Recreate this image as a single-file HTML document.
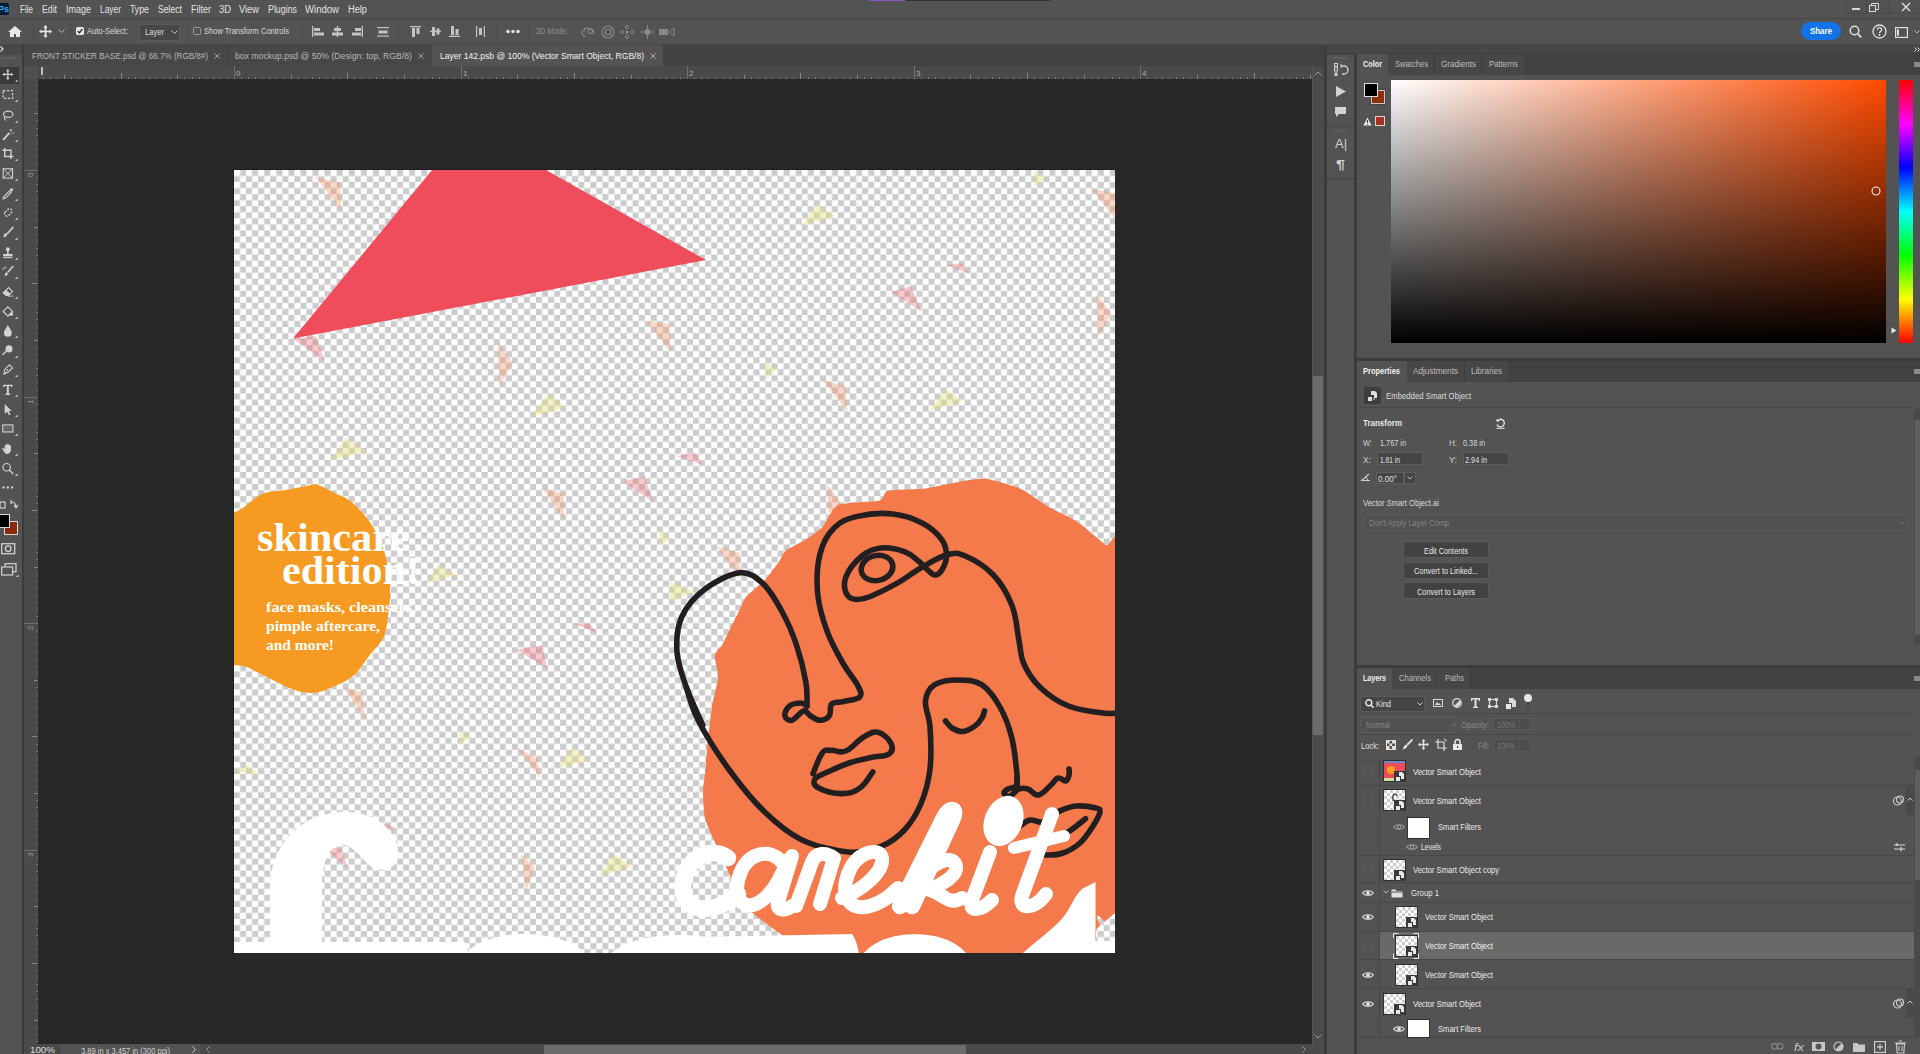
<!DOCTYPE html><html><head><meta charset="utf-8"><style>
html,body{margin:0;padding:0;width:1920px;height:1054px;overflow:hidden;background:#535353;}
body{position:relative;font-family:"Liberation Sans",sans-serif;}
.a{position:absolute;}
.t{white-space:nowrap;}
svg{overflow:visible;}
</style></head><body>
<div class="a" style="left:0px;top:0px;width:1920px;height:18px;background:#535353;"></div>
<div class="a" style="left:0px;top:18px;width:1920px;height:1px;background:#474747;"></div>
<div class="a" style="left:869px;top:0px;width:36px;height:1px;background:#8856c4;"></div>
<div class="a" style="left:905px;top:0px;width:145px;height:1px;background:#333;"></div>
<div class="a" style="left:0px;top:3px;width:9px;height:12px;background:#001e36;border-radius:0 2px 2px 0;"></div>
<div class="a t" style="left:-2px;top:4.4px;font-size:9px;line-height:10.8px;color:#31a8ff;font-weight:bold;">Ps</div>
<div class="a t" style="left:20px;top:4.1px;font-size:10px;line-height:12.0px;color:#e2e2e2;transform:scaleX(0.807);transform-origin:0 0;">File</div>
<div class="a t" style="left:42px;top:4.1px;font-size:10px;line-height:12.0px;color:#e2e2e2;transform:scaleX(0.871);transform-origin:0 0;">Edit</div>
<div class="a t" style="left:66px;top:4.1px;font-size:10px;line-height:12.0px;color:#e2e2e2;transform:scaleX(0.900);transform-origin:0 0;">Image</div>
<div class="a t" style="left:100px;top:4.1px;font-size:10px;line-height:12.0px;color:#e2e2e2;transform:scaleX(0.840);transform-origin:0 0;">Layer</div>
<div class="a t" style="left:130px;top:4.1px;font-size:10px;line-height:12.0px;color:#e2e2e2;transform:scaleX(0.876);transform-origin:0 0;">Type</div>
<div class="a t" style="left:158px;top:4.1px;font-size:10px;line-height:12.0px;color:#e2e2e2;transform:scaleX(0.864);transform-origin:0 0;">Select</div>
<div class="a t" style="left:191px;top:4.1px;font-size:10px;line-height:12.0px;color:#e2e2e2;transform:scaleX(0.900);transform-origin:0 0;">Filter</div>
<div class="a t" style="left:219px;top:4.1px;font-size:10px;line-height:12.0px;color:#e2e2e2;transform:scaleX(0.939);transform-origin:0 0;">3D</div>
<div class="a t" style="left:239px;top:4.1px;font-size:10px;line-height:12.0px;color:#e2e2e2;transform:scaleX(0.931);transform-origin:0 0;">View</div>
<div class="a t" style="left:268px;top:4.1px;font-size:10px;line-height:12.0px;color:#e2e2e2;transform:scaleX(0.884);transform-origin:0 0;">Plugins</div>
<div class="a t" style="left:305px;top:4.1px;font-size:10px;line-height:12.0px;color:#e2e2e2;transform:scaleX(0.956);transform-origin:0 0;">Window</div>
<div class="a t" style="left:348px;top:4.1px;font-size:10px;line-height:12.0px;color:#e2e2e2;transform:scaleX(0.924);transform-origin:0 0;">Help</div>
<div class="a" style="left:1846px;top:0px;width:74px;height:14px;background:#535353;border-left:1px solid #4a4a4a;border-bottom:1px solid #4a4a4a;border-radius:0 0 0 3px;box-sizing:border-box;"></div>
<div class="a" style="left:1866px;top:0px;width:1px;height:14px;background:#4a4a4a;"></div>
<div class="a" style="left:1888px;top:0px;width:1px;height:14px;background:#4a4a4a;"></div>
<div class="a" style="left:1852px;top:8px;width:8px;height:2px;background:#d8d8d8;"></div>
<svg class="a" style="left:1869px;top:3px;" width="10" height="9" viewBox="0 0 10 9"><rect x="0.5" y="2.5" width="6" height="6" fill="none" stroke="#d8d8d8"/><path d="M2.5 2.5V0.5h7v6h-3" fill="none" stroke="#d8d8d8"/></svg>
<svg class="a" style="left:1901px;top:2px;" width="10" height="10" viewBox="0 0 10 10"><path d="M1 1L9 9M9 1L1 9" stroke="#e0e0e0" stroke-width="1.4"/></svg>
<div class="a" style="left:0px;top:19px;width:1920px;height:25px;background:#535353;"></div>
<div class="a" style="left:0px;top:44px;width:1920px;height:1px;background:#474747;"></div>
<svg class="a" style="left:8px;top:26px;" width="14" height="11" viewBox="0 0 14 11"><path d="M7 0L0 6h2v5h4V8h2v3h4V6h2z" fill="#e8e8e8"/></svg>
<div class="a" style="left:33px;top:24px;width:1px;height:16px;background:#4a4a4a;"></div>
<div class="a" style="left:70px;top:24px;width:1px;height:16px;background:#4a4a4a;"></div>
<div class="a" style="left:187px;top:24px;width:1px;height:16px;background:#4a4a4a;"></div>
<div class="a" style="left:302px;top:24px;width:1px;height:16px;background:#4a4a4a;"></div>
<div class="a" style="left:398px;top:24px;width:1px;height:16px;background:#4a4a4a;"></div>
<div class="a" style="left:496px;top:24px;width:1px;height:16px;background:#4a4a4a;"></div>
<div class="a" style="left:528px;top:24px;width:1px;height:16px;background:#4a4a4a;"></div>
<svg class="a" style="left:39px;top:25px;" width="13" height="13" viewBox="0 0 13 13"><path d="M6.5 0l2.2 2.6H7.4v3.1h3.1V4.4L13 6.5l-2.5 2.1V7.3H7.4v3.1h1.3L6.5 13l-2.2-2.6h1.3V7.3H2.5v1.3L0 6.5l2.5-2.1v1.3h3.1V2.6H4.3z" fill="#e8e8e8"/></svg>
<svg class="a" style="left:58px;top:29px;" width="7" height="5" viewBox="0 0 7 5"><path d="M0.5 0.5l3 3 3-3" fill="none" stroke="#bbb"/></svg>
<div class="a" style="left:76px;top:27px;width:8px;height:8px;background:#e8e8e8;border-radius:1.5px;"></div>
<svg class="a" style="left:77px;top:28px;" width="6" height="6" viewBox="0 0 6 6"><path d="M0.8 3l1.6 1.8L5.3 1" fill="none" stroke="#333" stroke-width="1.4"/></svg>
<div class="a t" style="left:87px;top:26.4px;font-size:9px;line-height:10.8px;color:#dcdcdc;transform:scaleX(0.836);transform-origin:0 0;">Auto-Select:</div>
<div class="a" style="left:139px;top:24px;width:41px;height:17px;background:#474747;border:1px solid #5c5c5c;border-radius:2px;box-sizing:border-box;"></div>
<div class="a t" style="left:145px;top:27.4px;font-size:9px;line-height:10.8px;color:#dcdcdc;transform:scaleX(0.844);transform-origin:0 0;">Layer</div>
<svg class="a" style="left:171px;top:30px;" width="7" height="5" viewBox="0 0 7 5"><path d="M0.5 0.5l3 3 3-3" fill="none" stroke="#ccc"/></svg>
<div class="a" style="left:193px;top:27px;width:8px;height:8px;background:transparent;border:1px solid #9a9a9a;border-radius:1.5px;box-sizing:border-box;"></div>
<div class="a t" style="left:204px;top:26.4px;font-size:9px;line-height:10.8px;color:#dcdcdc;transform:scaleX(0.837);transform-origin:0 0;">Show Transform Controls</div>
<svg class="a" style="left:312px;top:26px;" width="12" height="11" viewBox="0 0 12 11"><rect x="0" y="0" width="1.3" height="11" fill="#c4c4c4"/><rect x="2" y="2" width="6" height="3" fill="#c4c4c4"/><rect x="2" y="6.5" width="10" height="3" fill="#c4c4c4"/></svg>
<svg class="a" style="left:332px;top:26px;" width="11" height="11" viewBox="0 0 11 11"><rect x="4.8" y="0" width="1.3" height="11" fill="#c4c4c4"/><rect x="2" y="2" width="7" height="3" fill="#c4c4c4"/><rect x="0" y="6.5" width="11" height="3" fill="#c4c4c4"/></svg>
<svg class="a" style="left:352px;top:26px;" width="11" height="11" viewBox="0 0 11 11"><rect x="9.7" y="0" width="1.3" height="11" fill="#c4c4c4"/><rect x="3" y="2" width="6" height="3" fill="#c4c4c4"/><rect x="0" y="6.5" width="9" height="3" fill="#c4c4c4"/></svg>
<svg class="a" style="left:377px;top:27px;" width="12" height="10" viewBox="0 0 12 10"><rect x="0" y="0" width="12" height="1.2" fill="#c4c4c4"/><rect x="1.5" y="3.5" width="9" height="3" fill="#c4c4c4"/><rect x="0" y="8.5" width="12" height="1.2" fill="#c4c4c4"/></svg>
<svg class="a" style="left:410px;top:26px;" width="11" height="11" viewBox="0 0 11 11"><rect x="0" y="0" width="11" height="1.3" fill="#c4c4c4"/><rect x="2" y="2" width="3" height="9" fill="#c4c4c4"/><rect x="6.5" y="2" width="3" height="6" fill="#c4c4c4"/></svg>
<svg class="a" style="left:430px;top:26px;" width="11" height="11" viewBox="0 0 11 11"><rect x="0" y="4.8" width="11" height="1.3" fill="#c4c4c4"/><rect x="2" y="1" width="3" height="9" fill="#c4c4c4"/><rect x="6.5" y="2.5" width="3" height="6" fill="#c4c4c4"/></svg>
<svg class="a" style="left:449px;top:26px;" width="11" height="11" viewBox="0 0 11 11"><rect x="0" y="9.7" width="11" height="1.3" fill="#c4c4c4"/><rect x="2" y="0" width="3" height="9" fill="#c4c4c4"/><rect x="6.5" y="3" width="3" height="6" fill="#c4c4c4"/></svg>
<svg class="a" style="left:476px;top:26px;" width="9" height="11" viewBox="0 0 9 11"><rect x="0" y="0" width="1.2" height="11" fill="#c4c4c4"/><rect x="3" y="2" width="3" height="7" fill="#c4c4c4"/><rect x="7.8" y="0" width="1.2" height="11" fill="#c4c4c4"/></svg>
<svg class="a" style="left:506px;top:29px;" width="14" height="5" viewBox="0 0 14 5"><circle cx="2" cy="2.5" r="1.8" fill="#e0e0e0"/><circle cx="7" cy="2.5" r="1.8" fill="#e0e0e0"/><circle cx="12" cy="2.5" r="1.8" fill="#e0e0e0"/></svg>
<div class="a t" style="left:536px;top:26.4px;font-size:9px;line-height:10.8px;color:#8c8c8c;transform:scaleX(0.820);transform-origin:0 0;">3D Mode:</div>
<svg class="a" style="left:581px;top:25px;" width="15" height="13" viewBox="0 0 15 13"><path d="M3 10C0 10 0 6 3 6 3 2 8 2 9 5 12 4 14 7 12 9" fill="none" stroke="#8a8a8a" stroke-width="1.2"/><circle cx="9" cy="6" r="2.5" fill="none" stroke="#8a8a8a"/><path d="M2 11l3 1" stroke="#8a8a8a"/></svg>
<svg class="a" style="left:601px;top:25px;" width="14" height="14" viewBox="0 0 14 14"><circle cx="7" cy="7" r="6" fill="none" stroke="#8a8a8a" stroke-width="1.2"/><circle cx="7" cy="7" r="3" fill="none" stroke="#8a8a8a" stroke-width="1.2"/></svg>
<svg class="a" style="left:620px;top:25px;" width="14" height="14" viewBox="0 0 14 14"><path d="M7 0l2 2-2 2-2-2zM7 10l2 2-2 2-2-2zM0 7l2-2 2 2-2 2zM10 7l2-2 2 2-2 2z" fill="none" stroke="#8a8a8a"/><circle cx="7" cy="7" r="1.5" fill="#8a8a8a"/></svg>
<svg class="a" style="left:640px;top:25px;" width="15" height="14" viewBox="0 0 15 14"><path d="M7.5 0v14M0 7h15" stroke="#8a8a8a" stroke-width="1.2"/><circle cx="7.5" cy="7" r="3" fill="#8a8a8a"/></svg>
<svg class="a" style="left:659px;top:27px;" width="16" height="10" viewBox="0 0 16 10"><rect x="0" y="2" width="9" height="6" fill="#8a8a8a"/><path d="M10 5l5-4v8z" fill="none" stroke="#8a8a8a"/></svg>
<div class="a" style="left:1801px;top:22px;width:40px;height:18px;background:#1473e6;border-radius:9px;"></div>
<div class="a t" style="left:1810px;top:26.4px;font-size:9px;line-height:10.8px;color:#ffffff;font-weight:bold;transform:scaleX(0.880);transform-origin:0 0;">Share</div>
<svg class="a" style="left:1849px;top:25px;" width="13" height="13" viewBox="0 0 13 13"><circle cx="5.5" cy="5.5" r="4.3" fill="none" stroke="#e0e0e0" stroke-width="1.5"/><path d="M8.6 8.6L12.3 12.3" stroke="#e0e0e0" stroke-width="1.7"/></svg>
<svg class="a" style="left:1872px;top:24px;" width="15" height="15" viewBox="0 0 15 15"><circle cx="7.5" cy="7.5" r="6.5" fill="none" stroke="#e0e0e0" stroke-width="1.3"/><path d="M5.4 5.8a2.1 2.1 0 1 1 3 1.8c-.7.4-.9.8-.9 1.6" fill="none" stroke="#e0e0e0" stroke-width="1.3"/><circle cx="7.5" cy="11" r=".9" fill="#e0e0e0"/></svg>
<svg class="a" style="left:1895px;top:27px;" width="13" height="11" viewBox="0 0 13 11"><rect x="0.6" y="0.6" width="11.8" height="9.8" fill="none" stroke="#e0e0e0" stroke-width="1.2"/><rect x="2" y="2.5" width="2" height="6" fill="#e0e0e0"/></svg>
<svg class="a" style="left:1914px;top:30px;" width="6" height="4" viewBox="0 0 6 4"><path d="M0.5 0.5l2.5 2.5 2.5-2.5" fill="none" stroke="#bbb"/></svg>
<div class="a" style="left:0px;top:45px;width:22px;height:999px;background:#535353;"></div>
<div class="a" style="left:0px;top:45px;width:22px;height:9px;background:#474747;"></div>
<svg class="a" style="left:0px;top:46px;" width="5" height="6" viewBox="0 0 5 6"><path d="M0.5 0.5l2.5 2.5-2.5 2.5" fill="none" stroke="#ddd" stroke-width="1.2"/></svg>
<div class="a" style="left:0px;top:54px;width:22px;height:1px;background:#4a4a4a;"></div>
<div class="a" style="left:1px;top:57px;width:15px;height:2px;background:#5e5e5e;"></div>
<div class="a" style="left:22px;top:45px;width:2px;height:1009px;background:#3c3c3c;"></div>
<div class="a" style="left:0px;top:67px;width:19px;height:17px;background:#3a3a3a;"></div>
<svg class="a" style="left:0px;top:66px;" width="16" height="16" viewBox="0 0 16 16"><g transform="translate(1.6 2.2) scale(0.78)"><path d="M8 1l2.4 2.8H8.8v3.4h3.4V5.6L15 8l-2.8 2.4V8.8H8.8v3.4h1.6L8 15l-2.4-2.8h1.6V8.8H3.8v1.6L1 8l2.8-2.4v1.6h3.4V3.8H5.6z" fill="#d2d2d2"/></g></svg>
<svg class="a" style="left:15px;top:79px;" width="3" height="3" viewBox="0 0 3 3"><path d="M2.5 0.5v2.5H0z" fill="#d2d2d2"/></svg>
<svg class="a" style="left:0px;top:86px;" width="16" height="16" viewBox="0 0 16 16"><g transform="translate(1.6 2.2) scale(0.78)"><rect x="2" y="3" width="12" height="10" fill="none" stroke="#d2d2d2" stroke-width="1.6" stroke-dasharray="3 2"/></g></svg>
<svg class="a" style="left:15px;top:99px;" width="3" height="3" viewBox="0 0 3 3"><path d="M2.5 0.5v2.5H0z" fill="#d2d2d2"/></svg>
<svg class="a" style="left:0px;top:107px;" width="16" height="16" viewBox="0 0 16 16"><g transform="translate(1.6 2.2) scale(0.78)"><ellipse cx="8.5" cy="6.5" rx="6" ry="4" fill="none" stroke="#d2d2d2" stroke-width="1.4"/><path d="M4 10c-1 2 0 4 2 4" fill="none" stroke="#d2d2d2" stroke-width="1.3"/></g></svg>
<svg class="a" style="left:15px;top:120px;" width="3" height="3" viewBox="0 0 3 3"><path d="M2.5 0.5v2.5H0z" fill="#d2d2d2"/></svg>
<svg class="a" style="left:0px;top:126px;" width="16" height="16" viewBox="0 0 16 16"><g transform="translate(1.6 2.2) scale(0.78)"><path d="M2 15L10 6" stroke="#d2d2d2" stroke-width="2.4"/><path d="M12 1v3M10.5 2.5h3M14 6h2M12 7l1 1" stroke="#d2d2d2" stroke-width="1.2"/></g></svg>
<svg class="a" style="left:15px;top:139px;" width="3" height="3" viewBox="0 0 3 3"><path d="M2.5 0.5v2.5H0z" fill="#d2d2d2"/></svg>
<svg class="a" style="left:0px;top:145px;" width="16" height="16" viewBox="0 0 16 16"><g transform="translate(1.6 2.2) scale(0.78)"><path d="M4 1v11h11M1 4h11v11" fill="none" stroke="#d2d2d2" stroke-width="1.8"/></g></svg>
<svg class="a" style="left:15px;top:158px;" width="3" height="3" viewBox="0 0 3 3"><path d="M2.5 0.5v2.5H0z" fill="#d2d2d2"/></svg>
<svg class="a" style="left:0px;top:165px;" width="16" height="16" viewBox="0 0 16 16"><g transform="translate(1.6 2.2) scale(0.78)"><rect x="2" y="2" width="12" height="12" fill="none" stroke="#d2d2d2" stroke-width="1.4"/><path d="M2 2l12 12M14 2L2 14" stroke="#d2d2d2" stroke-width="1.2"/></g></svg>
<svg class="a" style="left:15px;top:178px;" width="3" height="3" viewBox="0 0 3 3"><path d="M2.5 0.5v2.5H0z" fill="#d2d2d2"/></svg>
<svg class="a" style="left:0px;top:185px;" width="16" height="16" viewBox="0 0 16 16"><g transform="translate(1.6 2.2) scale(0.78)"><path d="M2 15l1-3 7-7 2 2-7 7z" fill="none" stroke="#d2d2d2" stroke-width="1.4"/><path d="M10 3l3-2 2 2-2 3z" fill="#d2d2d2"/></g></svg>
<svg class="a" style="left:15px;top:198px;" width="3" height="3" viewBox="0 0 3 3"><path d="M2.5 0.5v2.5H0z" fill="#d2d2d2"/></svg>
<svg class="a" style="left:0px;top:204px;" width="16" height="16" viewBox="0 0 16 16"><g transform="translate(1.6 2.2) scale(0.78)"><rect x="3" y="5" width="11" height="6" rx="3" transform="rotate(-45 8.5 8)" fill="none" stroke="#d2d2d2" stroke-width="1.6" stroke-dasharray="2.5 1.5"/></g></svg>
<svg class="a" style="left:15px;top:217px;" width="3" height="3" viewBox="0 0 3 3"><path d="M2.5 0.5v2.5H0z" fill="#d2d2d2"/></svg>
<svg class="a" style="left:0px;top:224px;" width="16" height="16" viewBox="0 0 16 16"><g transform="translate(1.6 2.2) scale(0.78)"><path d="M15 1L7 10" stroke="#d2d2d2" stroke-width="2.2"/><path d="M6 9c-3 0-3 3-4 5 3 0 5-1 5-4z" fill="#d2d2d2"/></g></svg>
<svg class="a" style="left:15px;top:237px;" width="3" height="3" viewBox="0 0 3 3"><path d="M2.5 0.5v2.5H0z" fill="#d2d2d2"/></svg>
<svg class="a" style="left:0px;top:244px;" width="16" height="16" viewBox="0 0 16 16"><g transform="translate(1.6 2.2) scale(0.78)"><circle cx="8" cy="4" r="2.5" fill="#d2d2d2"/><rect x="7" y="6" width="2" height="4" fill="#d2d2d2"/><rect x="2" y="10" width="12" height="3" fill="#d2d2d2"/><rect x="2" y="14" width="12" height="1.3" fill="#d2d2d2"/></g></svg>
<svg class="a" style="left:15px;top:257px;" width="3" height="3" viewBox="0 0 3 3"><path d="M2.5 0.5v2.5H0z" fill="#d2d2d2"/></svg>
<svg class="a" style="left:0px;top:263px;" width="16" height="16" viewBox="0 0 16 16"><g transform="translate(1.6 2.2) scale(0.78)"><path d="M15 1L8 9" stroke="#d2d2d2" stroke-width="2"/><path d="M7 9c-2 0-3 2-3 5 3 0 4-2 4-4z" fill="#d2d2d2"/><path d="M1 6a5 5 0 0 1 5-3" fill="none" stroke="#d2d2d2" stroke-width="1.2"/></g></svg>
<svg class="a" style="left:15px;top:276px;" width="3" height="3" viewBox="0 0 3 3"><path d="M2.5 0.5v2.5H0z" fill="#d2d2d2"/></svg>
<svg class="a" style="left:0px;top:283px;" width="16" height="16" viewBox="0 0 16 16"><g transform="translate(1.6 2.2) scale(0.78)"><path d="M2 10l7-7 5 5-5 5H6z" fill="none" stroke="#d2d2d2" stroke-width="1.4"/><path d="M2 10l4-4 5 5-2 2H6z" fill="#d2d2d2"/><path d="M8 14h7" stroke="#d2d2d2" stroke-width="1.2"/></g></svg>
<svg class="a" style="left:15px;top:296px;" width="3" height="3" viewBox="0 0 3 3"><path d="M2.5 0.5v2.5H0z" fill="#d2d2d2"/></svg>
<svg class="a" style="left:0px;top:303px;" width="16" height="16" viewBox="0 0 16 16"><g transform="translate(1.6 2.2) scale(0.78)"><path d="M2 8l6-6 6 6-6 6z" fill="none" stroke="#d2d2d2" stroke-width="1.5"/><path d="M8 14l6-6 1 5z" fill="#d2d2d2"/></g></svg>
<svg class="a" style="left:15px;top:316px;" width="3" height="3" viewBox="0 0 3 3"><path d="M2.5 0.5v2.5H0z" fill="#d2d2d2"/></svg>
<svg class="a" style="left:0px;top:322px;" width="16" height="16" viewBox="0 0 16 16"><g transform="translate(1.6 2.2) scale(0.78)"><path d="M8 1C6 5 3 8 3 11a5 5 0 0 0 10 0c0-3-3-6-5-10z" fill="#d2d2d2"/></g></svg>
<svg class="a" style="left:15px;top:335px;" width="3" height="3" viewBox="0 0 3 3"><path d="M2.5 0.5v2.5H0z" fill="#d2d2d2"/></svg>
<svg class="a" style="left:0px;top:342px;" width="16" height="16" viewBox="0 0 16 16"><g transform="translate(1.6 2.2) scale(0.78)"><circle cx="9.5" cy="6" r="4.5" fill="#d2d2d2"/><path d="M6 9l-5 5" stroke="#d2d2d2" stroke-width="1.8"/></g></svg>
<svg class="a" style="left:15px;top:355px;" width="3" height="3" viewBox="0 0 3 3"><path d="M2.5 0.5v2.5H0z" fill="#d2d2d2"/></svg>
<svg class="a" style="left:0px;top:361px;" width="16" height="16" viewBox="0 0 16 16"><g transform="translate(1.6 2.2) scale(0.78)"><path d="M3 14l1-6 6-6 4 4-6 6z" fill="none" stroke="#d2d2d2" stroke-width="1.4"/><path d="M3 14l4-4" stroke="#d2d2d2"/><circle cx="7.5" cy="8.5" r="1.2" fill="#d2d2d2"/></g></svg>
<svg class="a" style="left:15px;top:374px;" width="3" height="3" viewBox="0 0 3 3"><path d="M2.5 0.5v2.5H0z" fill="#d2d2d2"/></svg>
<svg class="a" style="left:0px;top:381px;" width="16" height="16" viewBox="0 0 16 16"><g transform="translate(1.6 2.2) scale(0.78)"><path d="M2 2h12v3h-1.5L12 3.5H9.2V13l1.8.5V15H5v-1.5l1.8-.5V3.5H4L3.5 5H2z" fill="#d2d2d2"/></g></svg>
<svg class="a" style="left:15px;top:394px;" width="3" height="3" viewBox="0 0 3 3"><path d="M2.5 0.5v2.5H0z" fill="#d2d2d2"/></svg>
<svg class="a" style="left:0px;top:401px;" width="16" height="16" viewBox="0 0 16 16"><g transform="translate(1.6 2.2) scale(0.78)"><path d="M4 1v13l3-3 2.5 4.5 2-1L9 10h4z" fill="#d2d2d2"/></g></svg>
<svg class="a" style="left:15px;top:414px;" width="3" height="3" viewBox="0 0 3 3"><path d="M2.5 0.5v2.5H0z" fill="#d2d2d2"/></svg>
<svg class="a" style="left:0px;top:420px;" width="16" height="16" viewBox="0 0 16 16"><g transform="translate(1.6 2.2) scale(0.78)"><rect x="1.5" y="3.5" width="13" height="9" fill="none" stroke="#d2d2d2" stroke-width="1.5"/><rect x="3" y="5" width="10" height="6" fill="#6a6a6a"/></g></svg>
<svg class="a" style="left:15px;top:433px;" width="3" height="3" viewBox="0 0 3 3"><path d="M2.5 0.5v2.5H0z" fill="#d2d2d2"/></svg>
<svg class="a" style="left:0px;top:440px;" width="16" height="16" viewBox="0 0 16 16"><g transform="translate(1.6 2.2) scale(0.78)"><path d="M4 9V4.5a1 1 0 0 1 2 0V8V3a1 1 0 0 1 2 0v5V3.5a1 1 0 0 1 2 0V8V5a1 1 0 0 1 2 0v5c0 3-2 5-5 5-2 0-3-1-4-3l-2-3a1 1 0 0 1 2-1z" fill="#d2d2d2"/></g></svg>
<svg class="a" style="left:15px;top:453px;" width="3" height="3" viewBox="0 0 3 3"><path d="M2.5 0.5v2.5H0z" fill="#d2d2d2"/></svg>
<svg class="a" style="left:0px;top:460px;" width="16" height="16" viewBox="0 0 16 16"><g transform="translate(1.6 2.2) scale(0.78)"><circle cx="6.5" cy="6.5" r="4.8" fill="none" stroke="#d2d2d2" stroke-width="1.5"/><path d="M10 10l5 5" stroke="#d2d2d2" stroke-width="1.8"/></g></svg>
<svg class="a" style="left:15px;top:473px;" width="3" height="3" viewBox="0 0 3 3"><path d="M2.5 0.5v2.5H0z" fill="#d2d2d2"/></svg>
<svg class="a" style="left:0px;top:479px;" width="16" height="16" viewBox="0 0 16 16"><g transform="translate(1.6 2.2) scale(0.78)"><circle cx="2.5" cy="8" r="1.5" fill="#d2d2d2"/><circle cx="8" cy="8" r="1.5" fill="#d2d2d2"/><circle cx="13.5" cy="8" r="1.5" fill="#d2d2d2"/></g></svg>
<svg class="a" style="left:0px;top:500px;" width="20" height="10" viewBox="0 0 20 10"><rect x="0" y="2" width="5" height="6" fill="none" stroke="#d2d2d2" stroke-width="1.2"/><path d="M11 2c4 0 5 2 5 5M14 5l2 3 2-3M11 0v4" fill="none" stroke="#d2d2d2" stroke-width="1.2"/></svg>
<div class="a" style="left:4px;top:521px;width:14px;height:14px;background:#8b2a0c;border:1px solid #d8d8d8;box-sizing:border-box;"></div>
<div class="a" style="left:0px;top:514px;width:10px;height:14px;background:#000;border:1px solid #d8d8d8;border-left:none;box-sizing:border-box;"></div>
<svg class="a" style="left:1px;top:543px;" width="16" height="12" viewBox="0 0 16 12"><rect x="0.7" y="0.7" width="13" height="10" fill="none" stroke="#d2d2d2" stroke-width="1.3"/><circle cx="7.2" cy="5.7" r="2.8" fill="none" stroke="#d2d2d2" stroke-width="1.3"/></svg>
<svg class="a" style="left:1px;top:563px;" width="18" height="13" viewBox="0 0 18 13"><rect x="4" y="0.7" width="11" height="8" fill="none" stroke="#d2d2d2" stroke-width="1.2"/><rect x="0.7" y="4" width="11" height="8" fill="#535353" stroke="#d2d2d2" stroke-width="1.2"/></svg>
<svg class="a" style="left:16px;top:574px;" width="3" height="3" viewBox="0 0 3 3"><path d="M2.5 0.5v2.5H0z" fill="#d2d2d2"/></svg>
<div class="a" style="left:24px;top:45px;width:1300px;height:21px;background:#424242;"></div>
<div class="a" style="left:24px;top:45px;width:203px;height:21px;background:#474747;"></div>
<div class="a" style="left:227px;top:45px;width:1px;height:21px;background:#3d3d3d;"></div>
<div class="a" style="left:228px;top:45px;width:204px;height:21px;background:#474747;"></div>
<div class="a" style="left:432px;top:45px;width:231px;height:21px;background:#535353;"></div>
<div class="a t" style="left:32px;top:50.9px;font-size:9px;line-height:10.8px;color:#b8b8b8;transform:scaleX(0.898);transform-origin:0 0;">FRONT STICKER BASE.psd @ 66.7% (RGB/8#)</div>
<svg class="a" style="left:214px;top:52.5px;" width="6" height="6" viewBox="0 0 6 6"><path d="M0.5 0.5l5 5M5.5 0.5l-5 5" stroke="#a8a8a8" stroke-width="0.9"/></svg>
<div class="a t" style="left:235px;top:50.9px;font-size:9px;line-height:10.8px;color:#b8b8b8;transform:scaleX(0.963);transform-origin:0 0;">box mockup.psd @ 50% (Design: top, RGB/8)</div>
<svg class="a" style="left:418px;top:52.5px;" width="6" height="6" viewBox="0 0 6 6"><path d="M0.5 0.5l5 5M5.5 0.5l-5 5" stroke="#a8a8a8" stroke-width="0.9"/></svg>
<div class="a t" style="left:439.5px;top:50.9px;font-size:9px;line-height:10.8px;color:#f2f2f2;transform:scaleX(0.948);transform-origin:0 0;">Layer 142.psb @ 100% (Vector Smart Object, RGB/8)</div>
<svg class="a" style="left:650px;top:52.5px;" width="6" height="6" viewBox="0 0 6 6"><path d="M0.5 0.5l5 5M5.5 0.5l-5 5" stroke="#c0c0c0" stroke-width="0.9"/></svg>
<div class="a" style="left:24px;top:66px;width:1300px;height:13px;background:#4a4a4a;"></div>
<div class="a" style="left:24px;top:66px;width:14px;height:13px;background:#505050;"></div>
<div class="a" style="left:24px;top:79px;width:14px;height:965px;background:#4a4a4a;"></div>
<div class="a" style="left:38px;top:79px;width:1274px;height:965px;background:#282828;"></div>
<svg class="a" style="left:38px;top:66px;" width="1274" height="13" viewBox="0 0 1274 13"><g fill="#858585"><rect x="5" y="11.5" width="1" height="1.5"/><rect x="12" y="11.5" width="1" height="1.5"/><rect x="19" y="11.5" width="1" height="1.5"/><rect x="26" y="9" width="1" height="4"/><rect x="33" y="11.5" width="1" height="1.5"/><rect x="40" y="11.5" width="1" height="1.5"/><rect x="47" y="11.5" width="1" height="1.5"/><rect x="54" y="11.5" width="1" height="1.5"/><rect x="61" y="11.5" width="1" height="1.5"/><rect x="69" y="11.5" width="1" height="1.5"/><rect x="76" y="11.5" width="1" height="1.5"/><rect x="83" y="7" width="1" height="6"/><rect x="90" y="11.5" width="1" height="1.5"/><rect x="97" y="11.5" width="1" height="1.5"/><rect x="104" y="11.5" width="1" height="1.5"/><rect x="111" y="11.5" width="1" height="1.5"/><rect x="118" y="11.5" width="1" height="1.5"/><rect x="125" y="11.5" width="1" height="1.5"/><rect x="132" y="11.5" width="1" height="1.5"/><rect x="139" y="9" width="1" height="4"/><rect x="146" y="11.5" width="1" height="1.5"/><rect x="154" y="11.5" width="1" height="1.5"/><rect x="161" y="11.5" width="1" height="1.5"/><rect x="168" y="11.5" width="1" height="1.5"/><rect x="175" y="11.5" width="1" height="1.5"/><rect x="182" y="11.5" width="1" height="1.5"/><rect x="189" y="11.5" width="1" height="1.5"/><rect x="196" y="0" width="1" height="13" fill="#6e6e6e"/><rect x="203" y="11.5" width="1" height="1.5"/><rect x="210" y="11.5" width="1" height="1.5"/><rect x="217" y="11.5" width="1" height="1.5"/><rect x="224" y="11.5" width="1" height="1.5"/><rect x="231" y="11.5" width="1" height="1.5"/><rect x="238" y="11.5" width="1" height="1.5"/><rect x="246" y="11.5" width="1" height="1.5"/><rect x="253" y="9" width="1" height="4"/><rect x="260" y="11.5" width="1" height="1.5"/><rect x="267" y="11.5" width="1" height="1.5"/><rect x="274" y="11.5" width="1" height="1.5"/><rect x="281" y="11.5" width="1" height="1.5"/><rect x="288" y="11.5" width="1" height="1.5"/><rect x="295" y="11.5" width="1" height="1.5"/><rect x="302" y="11.5" width="1" height="1.5"/><rect x="309" y="7" width="1" height="6"/><rect x="316" y="11.5" width="1" height="1.5"/><rect x="323" y="11.5" width="1" height="1.5"/><rect x="331" y="11.5" width="1" height="1.5"/><rect x="338" y="11.5" width="1" height="1.5"/><rect x="345" y="11.5" width="1" height="1.5"/><rect x="352" y="11.5" width="1" height="1.5"/><rect x="359" y="11.5" width="1" height="1.5"/><rect x="366" y="9" width="1" height="4"/><rect x="373" y="11.5" width="1" height="1.5"/><rect x="380" y="11.5" width="1" height="1.5"/><rect x="387" y="11.5" width="1" height="1.5"/><rect x="394" y="11.5" width="1" height="1.5"/><rect x="401" y="11.5" width="1" height="1.5"/><rect x="408" y="11.5" width="1" height="1.5"/><rect x="416" y="11.5" width="1" height="1.5"/><rect x="423" y="0" width="1" height="13" fill="#6e6e6e"/><rect x="430" y="11.5" width="1" height="1.5"/><rect x="437" y="11.5" width="1" height="1.5"/><rect x="444" y="11.5" width="1" height="1.5"/><rect x="451" y="11.5" width="1" height="1.5"/><rect x="458" y="11.5" width="1" height="1.5"/><rect x="465" y="11.5" width="1" height="1.5"/><rect x="472" y="11.5" width="1" height="1.5"/><rect x="479" y="9" width="1" height="4"/><rect x="486" y="11.5" width="1" height="1.5"/><rect x="493" y="11.5" width="1" height="1.5"/><rect x="500" y="11.5" width="1" height="1.5"/><rect x="508" y="11.5" width="1" height="1.5"/><rect x="515" y="11.5" width="1" height="1.5"/><rect x="522" y="11.5" width="1" height="1.5"/><rect x="529" y="11.5" width="1" height="1.5"/><rect x="536" y="7" width="1" height="6"/><rect x="543" y="11.5" width="1" height="1.5"/><rect x="550" y="11.5" width="1" height="1.5"/><rect x="557" y="11.5" width="1" height="1.5"/><rect x="564" y="11.5" width="1" height="1.5"/><rect x="571" y="11.5" width="1" height="1.5"/><rect x="578" y="11.5" width="1" height="1.5"/><rect x="585" y="11.5" width="1" height="1.5"/><rect x="593" y="9" width="1" height="4"/><rect x="600" y="11.5" width="1" height="1.5"/><rect x="607" y="11.5" width="1" height="1.5"/><rect x="614" y="11.5" width="1" height="1.5"/><rect x="621" y="11.5" width="1" height="1.5"/><rect x="628" y="11.5" width="1" height="1.5"/><rect x="635" y="11.5" width="1" height="1.5"/><rect x="642" y="11.5" width="1" height="1.5"/><rect x="649" y="0" width="1" height="13" fill="#6e6e6e"/><rect x="656" y="11.5" width="1" height="1.5"/><rect x="663" y="11.5" width="1" height="1.5"/><rect x="670" y="11.5" width="1" height="1.5"/><rect x="678" y="11.5" width="1" height="1.5"/><rect x="685" y="11.5" width="1" height="1.5"/><rect x="692" y="11.5" width="1" height="1.5"/><rect x="699" y="11.5" width="1" height="1.5"/><rect x="706" y="9" width="1" height="4"/><rect x="713" y="11.5" width="1" height="1.5"/><rect x="720" y="11.5" width="1" height="1.5"/><rect x="727" y="11.5" width="1" height="1.5"/><rect x="734" y="11.5" width="1" height="1.5"/><rect x="741" y="11.5" width="1" height="1.5"/><rect x="748" y="11.5" width="1" height="1.5"/><rect x="755" y="11.5" width="1" height="1.5"/><rect x="762" y="7" width="1" height="6"/><rect x="770" y="11.5" width="1" height="1.5"/><rect x="777" y="11.5" width="1" height="1.5"/><rect x="784" y="11.5" width="1" height="1.5"/><rect x="791" y="11.5" width="1" height="1.5"/><rect x="798" y="11.5" width="1" height="1.5"/><rect x="805" y="11.5" width="1" height="1.5"/><rect x="812" y="11.5" width="1" height="1.5"/><rect x="819" y="9" width="1" height="4"/><rect x="826" y="11.5" width="1" height="1.5"/><rect x="833" y="11.5" width="1" height="1.5"/><rect x="840" y="11.5" width="1" height="1.5"/><rect x="847" y="11.5" width="1" height="1.5"/><rect x="855" y="11.5" width="1" height="1.5"/><rect x="862" y="11.5" width="1" height="1.5"/><rect x="869" y="11.5" width="1" height="1.5"/><rect x="876" y="0" width="1" height="13" fill="#6e6e6e"/><rect x="883" y="11.5" width="1" height="1.5"/><rect x="890" y="11.5" width="1" height="1.5"/><rect x="897" y="11.5" width="1" height="1.5"/><rect x="904" y="11.5" width="1" height="1.5"/><rect x="911" y="11.5" width="1" height="1.5"/><rect x="918" y="11.5" width="1" height="1.5"/><rect x="925" y="11.5" width="1" height="1.5"/><rect x="932" y="9" width="1" height="4"/><rect x="940" y="11.5" width="1" height="1.5"/><rect x="947" y="11.5" width="1" height="1.5"/><rect x="954" y="11.5" width="1" height="1.5"/><rect x="961" y="11.5" width="1" height="1.5"/><rect x="968" y="11.5" width="1" height="1.5"/><rect x="975" y="11.5" width="1" height="1.5"/><rect x="982" y="11.5" width="1" height="1.5"/><rect x="989" y="7" width="1" height="6"/><rect x="996" y="11.5" width="1" height="1.5"/><rect x="1003" y="11.5" width="1" height="1.5"/><rect x="1010" y="11.5" width="1" height="1.5"/><rect x="1017" y="11.5" width="1" height="1.5"/><rect x="1025" y="11.5" width="1" height="1.5"/><rect x="1032" y="11.5" width="1" height="1.5"/><rect x="1039" y="11.5" width="1" height="1.5"/><rect x="1046" y="9" width="1" height="4"/><rect x="1053" y="11.5" width="1" height="1.5"/><rect x="1060" y="11.5" width="1" height="1.5"/><rect x="1067" y="11.5" width="1" height="1.5"/><rect x="1074" y="11.5" width="1" height="1.5"/><rect x="1081" y="11.5" width="1" height="1.5"/><rect x="1088" y="11.5" width="1" height="1.5"/><rect x="1095" y="11.5" width="1" height="1.5"/><rect x="1102" y="0" width="1" height="13" fill="#6e6e6e"/><rect x="1109" y="11.5" width="1" height="1.5"/><rect x="1117" y="11.5" width="1" height="1.5"/><rect x="1124" y="11.5" width="1" height="1.5"/><rect x="1131" y="11.5" width="1" height="1.5"/><rect x="1138" y="11.5" width="1" height="1.5"/><rect x="1145" y="11.5" width="1" height="1.5"/><rect x="1152" y="11.5" width="1" height="1.5"/><rect x="1159" y="9" width="1" height="4"/><rect x="1166" y="11.5" width="1" height="1.5"/><rect x="1173" y="11.5" width="1" height="1.5"/><rect x="1180" y="11.5" width="1" height="1.5"/><rect x="1187" y="11.5" width="1" height="1.5"/><rect x="1194" y="11.5" width="1" height="1.5"/><rect x="1202" y="11.5" width="1" height="1.5"/><rect x="1209" y="11.5" width="1" height="1.5"/><rect x="1216" y="7" width="1" height="6"/><rect x="1223" y="11.5" width="1" height="1.5"/><rect x="1230" y="11.5" width="1" height="1.5"/><rect x="1237" y="11.5" width="1" height="1.5"/><rect x="1244" y="11.5" width="1" height="1.5"/><rect x="1251" y="11.5" width="1" height="1.5"/><rect x="1258" y="11.5" width="1" height="1.5"/><rect x="1265" y="11.5" width="1" height="1.5"/><rect x="1272" y="9" width="1" height="4"/></g></svg>
<div class="a t" style="left:236px;top:68.8px;font-size:8px;line-height:9.6px;color:#aaaaaa;">0</div>
<div class="a t" style="left:463px;top:68.8px;font-size:8px;line-height:9.6px;color:#aaaaaa;">1</div>
<div class="a t" style="left:689px;top:68.8px;font-size:8px;line-height:9.6px;color:#aaaaaa;">2</div>
<div class="a t" style="left:916px;top:68.8px;font-size:8px;line-height:9.6px;color:#aaaaaa;">3</div>
<div class="a t" style="left:1142px;top:68.8px;font-size:8px;line-height:9.6px;color:#aaaaaa;">4</div>
<svg class="a" style="left:24px;top:79px;" width="14" height="965" viewBox="0 0 14 965"><g fill="#858585"><rect x="12.5" y="6" width="1.5" height="1"/><rect x="12.5" y="13" width="1.5" height="1"/><rect x="12.5" y="20" width="1.5" height="1"/><rect x="12.5" y="27" width="1.5" height="1"/><rect x="10" y="34" width="4" height="1"/><rect x="12.5" y="41" width="1.5" height="1"/><rect x="12.5" y="49" width="1.5" height="1"/><rect x="12.5" y="56" width="1.5" height="1"/><rect x="12.5" y="63" width="1.5" height="1"/><rect x="12.5" y="70" width="1.5" height="1"/><rect x="12.5" y="77" width="1.5" height="1"/><rect x="12.5" y="84" width="1.5" height="1"/><rect x="0" y="91" width="14" height="1" fill="#6e6e6e"/><rect x="12.5" y="98" width="1.5" height="1"/><rect x="12.5" y="105" width="1.5" height="1"/><rect x="12.5" y="112" width="1.5" height="1"/><rect x="12.5" y="119" width="1.5" height="1"/><rect x="12.5" y="126" width="1.5" height="1"/><rect x="12.5" y="133" width="1.5" height="1"/><rect x="12.5" y="141" width="1.5" height="1"/><rect x="10" y="148" width="4" height="1"/><rect x="12.5" y="155" width="1.5" height="1"/><rect x="12.5" y="162" width="1.5" height="1"/><rect x="12.5" y="169" width="1.5" height="1"/><rect x="12.5" y="176" width="1.5" height="1"/><rect x="12.5" y="183" width="1.5" height="1"/><rect x="12.5" y="190" width="1.5" height="1"/><rect x="12.5" y="197" width="1.5" height="1"/><rect x="8" y="204" width="6" height="1"/><rect x="12.5" y="211" width="1.5" height="1"/><rect x="12.5" y="218" width="1.5" height="1"/><rect x="12.5" y="226" width="1.5" height="1"/><rect x="12.5" y="233" width="1.5" height="1"/><rect x="12.5" y="240" width="1.5" height="1"/><rect x="12.5" y="247" width="1.5" height="1"/><rect x="12.5" y="254" width="1.5" height="1"/><rect x="10" y="261" width="4" height="1"/><rect x="12.5" y="268" width="1.5" height="1"/><rect x="12.5" y="275" width="1.5" height="1"/><rect x="12.5" y="282" width="1.5" height="1"/><rect x="12.5" y="289" width="1.5" height="1"/><rect x="12.5" y="296" width="1.5" height="1"/><rect x="12.5" y="303" width="1.5" height="1"/><rect x="12.5" y="311" width="1.5" height="1"/><rect x="0" y="318" width="14" height="1" fill="#6e6e6e"/><rect x="12.5" y="325" width="1.5" height="1"/><rect x="12.5" y="332" width="1.5" height="1"/><rect x="12.5" y="339" width="1.5" height="1"/><rect x="12.5" y="346" width="1.5" height="1"/><rect x="12.5" y="353" width="1.5" height="1"/><rect x="12.5" y="360" width="1.5" height="1"/><rect x="12.5" y="367" width="1.5" height="1"/><rect x="10" y="374" width="4" height="1"/><rect x="12.5" y="381" width="1.5" height="1"/><rect x="12.5" y="388" width="1.5" height="1"/><rect x="12.5" y="395" width="1.5" height="1"/><rect x="12.5" y="403" width="1.5" height="1"/><rect x="12.5" y="410" width="1.5" height="1"/><rect x="12.5" y="417" width="1.5" height="1"/><rect x="12.5" y="424" width="1.5" height="1"/><rect x="8" y="431" width="6" height="1"/><rect x="12.5" y="438" width="1.5" height="1"/><rect x="12.5" y="445" width="1.5" height="1"/><rect x="12.5" y="452" width="1.5" height="1"/><rect x="12.5" y="459" width="1.5" height="1"/><rect x="12.5" y="466" width="1.5" height="1"/><rect x="12.5" y="473" width="1.5" height="1"/><rect x="12.5" y="480" width="1.5" height="1"/><rect x="10" y="488" width="4" height="1"/><rect x="12.5" y="495" width="1.5" height="1"/><rect x="12.5" y="502" width="1.5" height="1"/><rect x="12.5" y="509" width="1.5" height="1"/><rect x="12.5" y="516" width="1.5" height="1"/><rect x="12.5" y="523" width="1.5" height="1"/><rect x="12.5" y="530" width="1.5" height="1"/><rect x="12.5" y="537" width="1.5" height="1"/><rect x="0" y="544" width="14" height="1" fill="#6e6e6e"/><rect x="12.5" y="551" width="1.5" height="1"/><rect x="12.5" y="558" width="1.5" height="1"/><rect x="12.5" y="565" width="1.5" height="1"/><rect x="12.5" y="573" width="1.5" height="1"/><rect x="12.5" y="580" width="1.5" height="1"/><rect x="12.5" y="587" width="1.5" height="1"/><rect x="12.5" y="594" width="1.5" height="1"/><rect x="10" y="601" width="4" height="1"/><rect x="12.5" y="608" width="1.5" height="1"/><rect x="12.5" y="615" width="1.5" height="1"/><rect x="12.5" y="622" width="1.5" height="1"/><rect x="12.5" y="629" width="1.5" height="1"/><rect x="12.5" y="636" width="1.5" height="1"/><rect x="12.5" y="643" width="1.5" height="1"/><rect x="12.5" y="650" width="1.5" height="1"/><rect x="8" y="657" width="6" height="1"/><rect x="12.5" y="665" width="1.5" height="1"/><rect x="12.5" y="672" width="1.5" height="1"/><rect x="12.5" y="679" width="1.5" height="1"/><rect x="12.5" y="686" width="1.5" height="1"/><rect x="12.5" y="693" width="1.5" height="1"/><rect x="12.5" y="700" width="1.5" height="1"/><rect x="12.5" y="707" width="1.5" height="1"/><rect x="10" y="714" width="4" height="1"/><rect x="12.5" y="721" width="1.5" height="1"/><rect x="12.5" y="728" width="1.5" height="1"/><rect x="12.5" y="735" width="1.5" height="1"/><rect x="12.5" y="742" width="1.5" height="1"/><rect x="12.5" y="750" width="1.5" height="1"/><rect x="12.5" y="757" width="1.5" height="1"/><rect x="12.5" y="764" width="1.5" height="1"/><rect x="0" y="771" width="14" height="1" fill="#6e6e6e"/><rect x="12.5" y="778" width="1.5" height="1"/><rect x="12.5" y="785" width="1.5" height="1"/><rect x="12.5" y="792" width="1.5" height="1"/><rect x="12.5" y="799" width="1.5" height="1"/><rect x="12.5" y="806" width="1.5" height="1"/><rect x="12.5" y="813" width="1.5" height="1"/><rect x="12.5" y="820" width="1.5" height="1"/><rect x="10" y="827" width="4" height="1"/><rect x="12.5" y="835" width="1.5" height="1"/><rect x="12.5" y="842" width="1.5" height="1"/><rect x="12.5" y="849" width="1.5" height="1"/><rect x="12.5" y="856" width="1.5" height="1"/><rect x="12.5" y="863" width="1.5" height="1"/><rect x="12.5" y="870" width="1.5" height="1"/><rect x="12.5" y="877" width="1.5" height="1"/><rect x="8" y="884" width="6" height="1"/><rect x="12.5" y="891" width="1.5" height="1"/><rect x="12.5" y="898" width="1.5" height="1"/><rect x="12.5" y="905" width="1.5" height="1"/><rect x="12.5" y="912" width="1.5" height="1"/><rect x="12.5" y="920" width="1.5" height="1"/><rect x="12.5" y="927" width="1.5" height="1"/><rect x="12.5" y="934" width="1.5" height="1"/><rect x="10" y="941" width="4" height="1"/><rect x="12.5" y="948" width="1.5" height="1"/><rect x="12.5" y="955" width="1.5" height="1"/><rect x="12.5" y="962" width="1.5" height="1"/></g></svg>
<div class="a t" style="left:28.5px;top:170.0px;font-size:8px;line-height:9.6px;color:#9a9a9a;transform:rotate(-90deg);transform-origin:50% 50%;">0</div>
<div class="a t" style="left:28.5px;top:397.0px;font-size:8px;line-height:9.6px;color:#9a9a9a;transform:rotate(-90deg);transform-origin:50% 50%;">1</div>
<div class="a t" style="left:28.5px;top:623.0px;font-size:8px;line-height:9.6px;color:#9a9a9a;transform:rotate(-90deg);transform-origin:50% 50%;">2</div>
<div class="a t" style="left:28.5px;top:850.0px;font-size:8px;line-height:9.6px;color:#9a9a9a;transform:rotate(-90deg);transform-origin:50% 50%;">3</div>
<div class="a" style="left:41px;top:67px;width:1.5px;height:8px;background:#bdbdbd;"></div>
<div class="a" style="left:1312px;top:66px;width:12px;height:978px;background:#4a4a4a;"></div>
<div class="a" style="left:1312px;top:66px;width:1px;height:978px;background:#565656;"></div>
<div class="a" style="left:1313px;top:376px;width:10px;height:359px;background:#6b6b6b;"></div>
<svg class="a" style="left:1314px;top:71px;" width="8" height="5" viewBox="0 0 8 5"><path d="M0.5 4.5l3.5-3.5 3.5 3.5" fill="none" stroke="#9a9a9a"/></svg>
<svg class="a" style="left:1314px;top:1034px;" width="8" height="5" viewBox="0 0 8 5"><path d="M0.5 0.5l3.5 3.5 3.5-3.5" fill="none" stroke="#9a9a9a"/></svg>
<div class="a" style="left:24px;top:1044px;width:1300px;height:10px;background:#4a4a4a;"></div>
<div class="a" style="left:61px;top:1044px;width:139px;height:10px;background:#535353;"></div>
<div class="a t" style="left:30px;top:1045.4px;font-size:9px;line-height:10.8px;color:#e0e0e0;transform:scaleX(1.086);transform-origin:0 0;">100%</div>
<div class="a t" style="left:81px;top:1045.7px;font-size:8.5px;line-height:10.2px;color:#d0d0d0;transform:scaleX(0.884);transform-origin:0 0;">3.89 in x 3.457 in (300 ppi)</div>
<svg class="a" style="left:192px;top:1046px;" width="4" height="7" viewBox="0 0 4 7"><path d="M0.5 0.5l3 3-3 3" fill="none" stroke="#ccc"/></svg>
<svg class="a" style="left:206px;top:1046px;" width="4" height="7" viewBox="0 0 4 7"><path d="M3.5 0.5l-3 3 3 3" fill="none" stroke="#999"/></svg>
<div class="a" style="left:544px;top:1045px;width:422px;height:9px;background:#6b6b6b;"></div>
<svg class="a" style="left:1302px;top:1046px;" width="4" height="7" viewBox="0 0 4 7"><path d="M0.5 0.5l3 3-3 3" fill="none" stroke="#999"/></svg>
<div class="a" style="left:1324px;top:45px;width:3px;height:1009px;background:#3c3c3c;"></div>
<div class="a" style="left:233px;top:169px;width:882px;height:784px;background:#1e1e1e;"></div>
<div class="a" style="left:234px;top:170px;width:881px;height:783px;background:#ffffff;"></div>
<svg class="a" style="left:234px;top:170px" width="881" height="783" viewBox="234 170 881 783"><defs><clipPath id="ab"><rect x="234" y="170" width="881" height="783"/></clipPath></defs><g clip-path="url(#ab)"><defs><pattern id="ck" x="234" y="170" width="12.08" height="12.08" patternUnits="userSpaceOnUse"><rect x="0" y="0" width="12.08" height="12.08" fill="#fff"/><rect x="6.04" y="0" width="6.04" height="6.04" fill="#cccccc"/><rect x="0" y="6.04" width="6.04" height="6.04" fill="#cccccc"/></pattern></defs><rect x="234" y="170" width="881" height="783" fill="url(#ck)"/><path d="M315.6,176.7 L339.9,182.8 L341.4,211.6Z" fill="rgba(244,150,110,0.38)"/><path d="M292.9,339.0 L315.6,336.0 L324.7,360.4Z" fill="rgba(235,110,120,0.38)"/><path d="M497.8,342.0 L513.0,363.4 L499.3,386.0Z" fill="rgba(244,150,110,0.38)"/><path d="M646.5,321.0 L669.3,324.0 L670.8,352.8Z" fill="rgba(244,150,110,0.38)"/><path d="M547.9,393.8 L566.0,407.4 L531.2,416.5Z" fill="rgba(225,225,120,0.42)"/><path d="M346.0,437.8 L365.7,451.4 L330.8,460.5Z" fill="rgba(225,225,120,0.42)"/><path d="M676.9,456.0 L695.0,453.0 L702.7,465.0Z" fill="rgba(235,110,120,0.38)"/><path d="M1034.0,170.6 L1044.7,178.2 L1034.0,187.3Z" fill="rgba(225,225,120,0.42)"/><path d="M1091.7,188.8 L1116.0,193.4 L1116.0,220.7Z" fill="rgba(244,150,110,0.38)"/><path d="M816.9,204.0 L835.1,216.2 L801.7,225.3Z" fill="rgba(225,225,120,0.42)"/><path d="M946.0,264.8 L961.2,263.3 L970.3,273.9Z" fill="rgba(235,110,120,0.38)"/><path d="M891.3,292.0 L911.0,286.0 L921.7,311.8Z" fill="rgba(235,110,120,0.38)"/><path d="M1096.3,293.6 L1111.5,313.4 L1097.8,337.6Z" fill="rgba(244,150,110,0.38)"/><path d="M765.3,362.0 L777.4,369.5 L765.3,378.6Z" fill="rgba(225,225,120,0.42)"/><path d="M823.0,380.0 L845.8,386.2 L847.3,412.0Z" fill="rgba(244,150,110,0.38)"/><path d="M946.0,389.3 L962.7,401.4 L929.3,410.5Z" fill="rgba(225,225,120,0.42)"/><path d="M542.4,488.4 L563.8,493.2 L563.8,519.3Z" fill="rgba(244,150,110,0.38)"/><path d="M623.0,481.3 L644.4,476.6 L653.9,502.7Z" fill="rgba(235,110,120,0.38)"/><path d="M658.6,528.8 L670.5,538.2 L661.0,545.3Z" fill="rgba(225,225,120,0.42)"/><path d="M438.0,565.0 L457.0,575.0 L426.3,583.3Z" fill="rgba(225,225,120,0.42)"/><path d="M670.0,581.0 L694.0,592.0 L670.0,601.0Z" fill="rgba(225,225,120,0.42)"/><path d="M573.2,623.6 L589.8,623.6 L597.0,633.0Z" fill="rgba(235,110,120,0.38)"/><path d="M516.3,649.7 L542.4,645.0 L547.2,668.6Z" fill="rgba(235,110,120,0.38)"/><path d="M343.3,687.6 L362.2,692.3 L364.6,718.4Z" fill="rgba(244,150,110,0.38)"/><path d="M459.4,730.3 L471.3,737.4 L459.4,744.5Z" fill="rgba(225,225,120,0.42)"/><path d="M516.3,746.9 L537.7,758.7 L540.0,777.7Z" fill="rgba(244,150,110,0.38)"/><path d="M556.6,768.2 L573.2,746.9 L587.5,761.0Z" fill="rgba(225,225,120,0.42)"/><path d="M234.0,770.6 L248.4,765.8 L260.3,775.3Z" fill="rgba(225,225,120,0.42)"/><path d="M381.0,822.7 L395.4,827.5 L388.3,832.2Z" fill="rgba(235,110,120,0.38)"/><path d="M322.0,846.4 L341.0,848.8 L348.0,867.8Z" fill="rgba(235,110,120,0.38)"/><path d="M521.0,853.5 L535.3,867.8 L525.8,891.5Z" fill="rgba(244,150,110,0.38)"/><path d="M614.2,853.8 L632.4,866.8 L598.6,876.0Z" fill="rgba(225,225,120,0.42)"/><path d="M827.0,484.0 L842.4,505.0 L828.2,513.6Z" fill="rgba(244,150,110,0.38)"/><path d="M717.0,546.4 L739.8,553.0 L739.8,579.0Z" fill="rgba(244,150,110,0.38)"/><path d="M432,170 L546,170 L706,260 L293,338.5Z" fill="#f04d5c"/><path d="M316.4,484.6 C321.4,485.5 327.0,489.3 332.5,492.0 C338.0,494.7 343.8,496.3 349.5,500.6 C355.2,504.9 361.6,511.3 366.6,517.7 C371.6,524.1 375.8,530.8 379.4,539.0 C383.0,547.2 386.2,557.5 388.0,566.8 C389.8,576.0 390.0,586.3 390.0,594.5 C390.0,602.7 389.1,608.9 388.0,616.0 C386.9,623.1 386.9,630.3 383.7,637.0 C380.5,643.7 373.7,650.0 368.7,656.4 C363.7,662.8 359.5,670.6 353.8,675.6 C348.1,680.6 341.0,683.4 334.6,686.3 C328.2,689.1 321.8,692.0 315.4,692.7 C309.0,693.4 303.1,692.7 296.0,690.6 C288.9,688.5 280.9,683.9 272.7,680.0 C264.5,676.1 254.8,670.0 247.0,667.0 C239.2,664.0 229.5,666.5 226.0,662.0 C222.5,657.5 226.0,662.0 226.0,640.0 C226.0,618.0 226.0,550.3 226.0,530.0 C226.0,509.7 223.2,521.7 226.0,518.0 C228.8,514.3 236.8,512.0 242.8,508.0 C248.8,504.0 254.9,497.0 262.0,494.0 C269.1,491.0 278.7,491.2 285.5,490.0 C292.3,488.8 297.5,487.6 302.6,486.7 C307.8,485.8 311.4,483.7 316.4,484.6Z" fill="#f69a21"/><path d="M987.0,479.0 C992.6,479.8 1013.8,485.7 1020.0,488.5 C1026.2,491.3 1043.3,503.7 1049.0,507.0 C1054.7,510.3 1071.3,517.8 1077.0,521.6 C1082.7,525.4 1101.4,541.7 1105.7,545.0 C1110.0,548.3 1118.6,518.3 1120.0,555.0 C1121.4,591.7 1122.3,875.9 1120.0,912.0 C1117.7,948.1 1099.5,911.2 1097.0,916.0 C1094.5,920.8 1124.7,955.6 1095.0,960.0 C1065.3,964.4 830.0,961.5 800.0,960.0 C770.0,958.5 797.5,948.0 795.0,945.0 C792.5,942.0 780.0,934.0 775.0,930.0 C770.0,926.0 750.8,913.3 745.0,905.0 C739.2,896.7 721.0,855.3 717.0,846.7 C713.0,838.1 706.4,824.3 705.0,818.6 C703.6,812.9 703.0,794.5 703.0,790.0 C703.0,785.5 704.6,778.5 705.0,774.0 C705.4,769.5 706.7,751.2 707.4,744.5 C708.1,737.8 710.9,713.4 712.0,706.6 C713.1,699.9 717.7,682.1 718.0,677.0 C718.3,671.9 714.3,658.8 714.7,655.5 C715.1,652.2 720.8,647.4 722.4,644.5 C724.0,641.6 729.3,630.5 731.0,627.0 C732.7,623.5 738.3,612.6 739.8,609.6 C741.3,606.6 743.8,599.7 746.4,596.6 C749.0,593.5 762.7,582.5 766.0,579.0 C769.3,575.5 777.0,564.4 779.0,561.6 C781.0,558.8 783.0,552.9 785.6,550.7 C788.2,548.5 801.3,542.4 805.0,540.0 C808.7,537.6 819.4,530.2 822.7,526.7 C826.0,523.2 832.3,507.6 838.0,505.0 C843.7,502.4 874.5,501.9 879.5,500.5 C884.5,499.1 883.4,491.9 888.0,490.7 C892.6,489.5 918.0,489.5 925.5,488.5 C933.0,487.5 957.4,481.9 963.5,481.0 C969.6,480.1 981.4,478.2 987.0,479.0Z" fill="#f47a4b"/><path d="M1096,929 L1115,913 L1120,913 L1120,941 L1096,941Z" fill="url(#ck)"/><path d="M702.8,725.0 C700.1,718.8 690.7,699.7 686.4,687.5 C682.1,675.3 677.8,663.8 677.0,652.0 C676.2,640.2 677.0,627.5 681.7,617.0 C686.4,606.5 695.2,596.4 705.0,589.0 C714.8,581.6 730.5,573.5 740.3,572.7 C750.1,571.9 756.7,577.8 763.7,584.4 C770.7,591.0 777.0,602.4 782.5,612.5 C788.0,622.6 792.7,633.6 796.6,645.3 C800.5,657.0 804.3,672.7 806.0,682.8 C807.7,692.9 806.8,702.1 807.0,706.0" fill="none" stroke="#231f20" stroke-width="5.6" stroke-linecap="round" stroke-linejoin="round"/><path d="M807.0,706.0 C805.9,705.5 804.2,703.0 801.0,703.0 C797.8,703.0 792.5,703.7 789.5,706.0 C786.5,708.3 784.4,713.0 784.8,715.6 C785.2,718.2 788.5,721.1 791.9,720.3 C795.3,719.5 800.2,711.8 803.6,711.0 C807.0,710.2 807.6,714.3 810.6,716.0 C813.6,717.7 816.6,720.4 820.0,720.3 C823.4,720.2 827.3,718.6 829.4,715.6 C831.5,712.6 829.1,706.6 831.7,704.0 C834.3,701.4 838.2,702.9 843.4,701.6 C848.6,700.3 857.2,699.9 859.8,696.9 C862.4,693.9 860.5,691.0 857.5,685.0 C854.5,679.0 849.0,673.9 843.4,664.0 C837.8,654.1 831.7,643.9 827.0,631.0 C822.3,618.1 819.0,607.8 817.7,593.7 C816.4,579.6 817.0,566.0 820.0,554.0 C823.0,542.0 827.1,534.9 834.0,528.0 C840.9,521.1 846.7,519.0 857.5,516.4 C868.3,513.8 880.7,512.7 892.7,514.0 C904.7,515.3 914.0,518.7 923.0,523.4 C932.0,528.1 937.6,533.8 941.9,539.8 C946.2,545.8 946.5,550.5 946.5,556.0 C946.5,561.5 944.0,566.5 941.9,570.0 C939.8,573.5 937.4,575.0 934.8,575.0 C932.2,575.0 930.8,572.6 927.8,570.0 C924.8,567.4 922.7,564.4 918.4,561.0 C914.1,557.6 911.3,554.0 904.4,551.6 C897.5,549.2 888.8,547.2 881.0,548.0 C873.2,548.8 868.5,550.6 862.0,556.0 C855.5,561.4 848.4,570.0 845.8,577.3 C843.2,584.6 844.6,592.1 848.0,596.0 C851.4,599.9 855.9,600.5 864.5,598.4 C873.1,596.3 884.7,590.0 895.0,584.4 C905.3,578.8 911.4,573.4 920.8,568.0 C930.2,562.6 938.3,557.2 946.5,555.0 C954.7,552.8 956.7,552.3 965.3,556.0 C973.9,559.7 984.8,565.9 993.4,575.0 C1002.0,584.1 1007.3,593.5 1012.0,605.5 C1016.7,617.5 1016.8,629.9 1019.0,640.6 C1021.2,651.3 1020.0,655.4 1023.9,664.0 C1027.8,672.6 1032.1,679.8 1040.3,687.5 C1048.5,695.2 1056.4,701.3 1068.4,706.0 C1080.4,710.7 1095.6,712.2 1106.0,713.3 C1116.4,714.4 1121.5,712.2 1125.0,712.0" fill="none" stroke="#231f20" stroke-width="5.6" stroke-linecap="round" stroke-linejoin="round"/><ellipse cx="877" cy="568" rx="16" ry="12.5" transform="rotate(-14 877 568)" fill="none" stroke="#231f20" stroke-width="5.6"/><path d="M686.4,687.5 C688.3,692.9 691.0,706.4 698.0,720.0 C705.0,733.6 717.6,753.8 728.6,769.0 C739.6,784.2 751.6,799.3 763.7,811.0 C775.8,822.7 787.0,832.6 801.0,839.4 C815.0,846.2 834.7,850.8 848.0,852.0 C861.3,853.2 871.6,850.1 881.0,846.4 C890.4,842.7 897.8,837.1 904.4,830.0 C911.0,822.9 916.5,814.2 920.8,804.0 C925.1,793.8 928.5,781.8 930.0,769.0 C931.5,756.2 930.8,738.3 930.0,727.0 C929.2,715.7 924.7,708.0 925.5,701.0 C926.3,694.0 929.4,688.2 934.8,684.7 C940.2,681.2 950.2,680.0 958.0,680.0 C965.8,680.0 974.6,680.0 981.7,684.7 C988.8,689.4 995.5,699.0 1000.5,708.0 C1005.5,717.0 1009.3,727.6 1012.0,738.6 C1014.7,749.6 1016.1,765.5 1016.9,773.7 C1017.7,781.9 1016.9,785.4 1016.9,787.8" fill="none" stroke="#231f20" stroke-width="5.6" stroke-linecap="round" stroke-linejoin="round"/><path d="M1016.9,778.0 C1016.7,779.6 1017.8,783.8 1016.0,786.0 C1014.2,788.2 1010.4,787.6 1008.0,789.0 C1005.6,790.4 1003.6,791.6 1004.0,793.0 C1004.4,794.4 1007.0,796.8 1010.0,796.0 C1013.0,795.2 1015.4,790.4 1019.0,789.0 C1022.6,787.6 1024.1,787.8 1028.0,789.0 C1031.9,790.2 1034.0,795.8 1038.6,795.0 C1043.2,794.2 1047.1,788.4 1051.0,785.0 C1054.9,781.6 1055.1,778.8 1058.0,778.0 C1060.9,777.2 1063.4,781.6 1065.6,781.0 C1067.8,780.4 1068.3,777.4 1069.0,775.0 C1069.7,772.6 1069.0,770.2 1069.0,769.0" fill="none" stroke="#231f20" stroke-width="5.6" stroke-linecap="round" stroke-linejoin="round"/><path d="M1020.0,826.0 C1021.7,825.0 1026.3,820.7 1030.0,820.0 C1033.7,819.3 1038.3,822.8 1042.0,822.0 C1045.7,821.2 1048.7,817.0 1052.0,815.0 C1055.3,813.0 1057.9,811.5 1062.0,810.0 C1066.1,808.5 1070.8,806.3 1076.5,806.0 C1082.2,805.7 1092.1,807.0 1096.0,808.0 C1099.9,809.0 1100.5,809.0 1100.0,812.0 C1099.5,815.0 1096.3,820.8 1093.0,826.0 C1089.7,831.2 1085.0,838.5 1080.0,843.0 C1075.0,847.5 1068.8,851.0 1063.0,853.0 C1057.2,855.0 1049.7,855.2 1045.0,855.0 C1040.3,854.8 1036.7,852.5 1035.0,852.0" fill="none" stroke="#231f20" stroke-width="5.6" stroke-linecap="round" stroke-linejoin="round"/><path d="M1053.0,838.6 C1055.7,837.4 1063.6,834.7 1069.0,831.4 C1074.4,828.1 1082.8,820.9 1085.5,818.8" fill="none" stroke="#231f20" stroke-width="5.6" stroke-linecap="round" stroke-linejoin="round"/><path d="M813.0,773.7 C814.9,769.6 818.6,757.7 822.3,753.0 C826.0,748.3 826.6,750.7 831.3,750.3 C836.0,749.9 839.2,753.7 845.7,751.0 C852.2,748.3 857.2,740.7 863.7,737.0 C870.2,733.3 872.6,731.1 878.0,732.3 C883.4,733.5 888.6,738.7 890.8,743.0 C893.0,747.3 893.0,751.1 889.0,754.0 C885.0,756.9 879.0,755.7 871.0,757.5 C863.0,759.3 857.7,760.1 849.0,763.0 C840.3,765.9 834.5,768.8 827.7,772.0 C820.9,775.2 816.8,775.8 815.0,779.0 C813.2,782.2 813.3,785.1 818.7,788.0 C824.1,790.9 833.7,793.6 842.0,793.6 C850.3,793.6 853.8,792.3 860.0,788.0 C866.2,783.7 870.2,775.2 872.8,772.0" fill="none" stroke="#231f20" stroke-width="5.6" stroke-linecap="round" stroke-linejoin="round"/><path d="M945.5,721.0 C946.6,722.2 949.1,726.2 952.0,728.0 C954.9,729.8 959.2,731.8 963.0,731.5 C966.8,731.2 971.8,728.2 975.0,726.0 C978.2,723.8 980.4,720.5 982.0,718.0 C983.6,715.5 984.1,712.2 984.5,711.0" fill="none" stroke="#231f20" stroke-width="5.6" stroke-linecap="round" stroke-linejoin="round"/><path d="M270,960 L270,885 C272,840 305,812 345,812 C378,812 396,832 398,850 C400,866 388,872 376,869 C366,866 360,852 348,846 C334,840 322,856 322,885 L322,960Z" fill="#fff"/><path d="M230,942 L465,942 L470,960 L230,960Z" fill="#fff"/><ellipse cx="525" cy="962" rx="62" ry="28" fill="#fff"/><ellipse cx="680" cy="965" rx="75" ry="30" fill="#fff"/><path d="M660,945 L698,937 L852,934 C856,940 858,946 860,960 L660,960Z" fill="#fff"/><ellipse cx="915" cy="968" rx="57" ry="34" fill="#fff"/><path d="M1023,960 L1023,953 C1035,942 1055,928 1065,915 C1072,905 1075,895 1082,889 L1095.5,882 L1095.5,941 L1120,941 L1120,960Z" fill="#fff"/><path d="M728,858 C712,846 690,856 684,878 C679,898 690,912 712,908 C722,906 732,900 738,894" fill="none" stroke="#fff" stroke-width="16.5" stroke-linecap="round" stroke-linejoin="round"/><path d="M782,862 C770,848 748,852 740,874 C732,896 742,910 756,904 C770,898 780,880 788,860" fill="none" stroke="#fff" stroke-width="14" stroke-linecap="round" stroke-linejoin="round"/><path d="M792,856 L778,902 C776,910 784,912 792,906" fill="none" stroke="#fff" stroke-width="14" stroke-linecap="round" stroke-linejoin="round"/><path d="M796,906 L812,862 C816,852 826,852 834,858 L820,904" fill="none" stroke="#fff" stroke-width="14" stroke-linecap="round" stroke-linejoin="round"/><path d="M842,898 C862,890 884,872 882,858 C879,846 856,852 848,874 C840,896 850,912 870,906 C884,902 892,894 898,888" fill="none" stroke="#fff" stroke-width="14" stroke-linecap="round" stroke-linejoin="round"/><path d="M900,906 L944,818 C950,806 958,808 952,820 L912,906" fill="none" stroke="#fff" stroke-width="16.5" stroke-linecap="round" stroke-linejoin="round"/><path d="M916,884 C930,864 952,852 956,866 C958,878 936,886 930,890 C944,894 948,906 962,898" fill="none" stroke="#fff" stroke-width="14" stroke-linecap="round" stroke-linejoin="round"/><path d="M990,852 L972,900 C968,912 980,912 992,900" fill="none" stroke="#fff" stroke-width="14" stroke-linecap="round" stroke-linejoin="round"/><ellipse cx="1003.5" cy="821" rx="19" ry="26" transform="rotate(22 1003.5 821)" fill="#fff"/><path d="M1052,814 L1022,896 C1018,910 1034,910 1046,894" fill="none" stroke="#fff" stroke-width="14" stroke-linecap="round" stroke-linejoin="round"/><path d="M1014,848 L1064,836" fill="none" stroke="#fff" stroke-width="12" stroke-linecap="round" stroke-linejoin="round"/><text x="257" y="551" font-family="Liberation Serif" font-weight="bold" font-size="40" fill="#fff" textLength="152" lengthAdjust="spacingAndGlyphs">skincare</text><text x="282" y="584" font-family="Liberation Serif" font-weight="bold" font-size="40" fill="#fff" textLength="138" lengthAdjust="spacingAndGlyphs">edition!</text><text x="266" y="612" font-family="Liberation Serif" font-weight="bold" font-size="15" fill="#fff" textLength="150" lengthAdjust="spacingAndGlyphs">face masks, cleansers,</text><text x="266" y="631" font-family="Liberation Serif" font-weight="bold" font-size="15" fill="#fff" textLength="114" lengthAdjust="spacingAndGlyphs">pimple aftercare,</text><text x="266" y="650" font-family="Liberation Serif" font-weight="bold" font-size="15" fill="#fff" textLength="68" lengthAdjust="spacingAndGlyphs">and more!</text></g></svg>
<div class="a" style="left:1327px;top:45px;width:27px;height:1009px;background:#535353;"></div>
<div class="a" style="left:1327px;top:45px;width:27px;height:9px;background:#474747;"></div>
<svg class="a" style="left:1343px;top:47px;" width="7" height="5" viewBox="0 0 7 5"><path d="M3.5 0.5l-3 2 3 2M6.5 0.5l-3 2 3 2" fill="none" stroke="#ddd"/></svg>
<div class="a" style="left:1354px;top:54px;width:3px;height:1000px;background:#3c3c3c;"></div>
<div class="a" style="left:1327px;top:54px;width:27px;height:1px;background:#474747;"></div>
<div class="a" style="left:1333px;top:57px;width:14px;height:2px;background:#5e5e5e;"></div>
<div class="a" style="left:1327px;top:126px;width:27px;height:1px;background:#474747;"></div>
<div class="a" style="left:1333px;top:130px;width:14px;height:2px;background:#5e5e5e;"></div>
<div class="a" style="left:1327px;top:178px;width:27px;height:1px;background:#474747;"></div>
<svg class="a" style="left:1334px;top:63px;" width="14" height="14" viewBox="0 0 14 14"><rect x="0.5" y="0.5" width="3" height="3" fill="none" stroke="#d2d2d2"/><rect x="0.5" y="5" width="3" height="3" fill="none" stroke="#d2d2d2"/><rect x="0.5" y="9.5" width="3" height="3.5" fill="#d2d2d2"/><path d="M7 3h3a3 3 0 0 1 0 8H8" fill="none" stroke="#d2d2d2" stroke-width="1.3"/><path d="M7 1v4" stroke="#d2d2d2"/></svg>
<svg class="a" style="left:1336px;top:86px;" width="10" height="11" viewBox="0 0 10 11"><path d="M0 0L10 5.5 0 11z" fill="#d2d2d2"/></svg>
<svg class="a" style="left:1335px;top:107px;" width="11" height="11" viewBox="0 0 11 11"><path d="M0 0h11v7H4l-3 3V7H0z" fill="#d2d2d2"/></svg>
<div class="a t" style="left:1335px;top:136.6px;font-size:12px;line-height:14.4px;color:#d2d2d2;transform:scaleX(1.079);transform-origin:0 0;">A|</div>
<div class="a t" style="left:1336px;top:157.0px;font-size:13px;line-height:15.6px;color:#d2d2d2;font-weight:bold;transform:scaleX(1.245);transform-origin:0 0;">¶</div>
<div class="a" style="left:1327px;top:45px;width:593px;height:9px;background:#474747;"></div>
<div class="a" style="left:1327px;top:53px;width:593px;height:1px;background:#3e3e3e;"></div>
<svg class="a" style="left:1914px;top:47px;" width="6" height="5" viewBox="0 0 6 5"><path d="M0.5 0.5l2 2-2 2M3.5 0.5l2 2-2 2" fill="none" stroke="#ddd"/></svg>
<div class="a" style="left:1357px;top:54px;width:563px;height:21px;background:#424242;"></div>
<div class="a" style="left:1357px;top:54px;width:31px;height:21px;background:#535353;"></div>
<div class="a t" style="left:1363px;top:58.9px;font-size:9px;line-height:10.8px;color:#f0f0f0;font-weight:bold;transform:scaleX(0.809);transform-origin:0 0;">Color</div>
<div class="a" style="left:1388px;top:54px;width:46px;height:21px;background:#474747;"></div>
<div class="a" style="left:1434px;top:54px;width:1px;height:21px;background:#3d3d3d;"></div>
<div class="a t" style="left:1395px;top:58.9px;font-size:9px;line-height:10.8px;color:#bdbdbd;transform:scaleX(0.846);transform-origin:0 0;">Swatches</div>
<div class="a" style="left:1435px;top:54px;width:46px;height:21px;background:#474747;"></div>
<div class="a" style="left:1481px;top:54px;width:1px;height:21px;background:#3d3d3d;"></div>
<div class="a t" style="left:1441px;top:58.9px;font-size:9px;line-height:10.8px;color:#bdbdbd;transform:scaleX(0.897);transform-origin:0 0;">Gradients</div>
<div class="a" style="left:1482px;top:54px;width:43px;height:21px;background:#474747;"></div>
<div class="a" style="left:1525px;top:54px;width:1px;height:21px;background:#3d3d3d;"></div>
<div class="a t" style="left:1489px;top:58.9px;font-size:9px;line-height:10.8px;color:#bdbdbd;transform:scaleX(0.865);transform-origin:0 0;">Patterns</div>
<div class="a" style="left:1914px;top:62px;width:6px;height:5px;background:#8a8a8a;"></div>
<div class="a" style="left:1357px;top:75px;width:563px;height:284px;background:#535353;"></div>
<div class="a" style="left:1371px;top:90px;width:14px;height:14px;background:#8e2d0b;border:1px solid #c8c8c8;box-sizing:border-box;box-shadow:0 0 0 1px #444;"></div>
<div class="a" style="left:1364px;top:83px;width:14px;height:14px;background:#000;border:1px solid #e0e0e0;box-sizing:border-box;"></div>
<svg class="a" style="left:1363px;top:117px;" width="9" height="9" viewBox="0 0 9 9"><path d="M4.5 0.5L8.6 8.5H0.4z" fill="#e8e8e8"/><path d="M4.5 3v3M4.5 7v.8" stroke="#333" stroke-width="1.1"/></svg>
<div class="a" style="left:1375px;top:116px;width:10px;height:10px;background:#a3321f;border:1px solid #d8d8d8;box-sizing:border-box;"></div>
<div class="a" style="left:1391px;top:80px;width:495px;height:263px;background:#ff4b00;background-image:linear-gradient(to bottom,rgba(0,0,0,0),#000),linear-gradient(to right,#fff,rgba(255,255,255,0));"></div>
<svg class="a" style="left:1871px;top:186px;" width="10" height="10" viewBox="0 0 10 10"><circle cx="5" cy="5" r="4" fill="none" stroke="#f0f0f0" stroke-width="1.1"/></svg>
<div class="a" style="left:1899px;top:80px;width:14px;height:263px;background:red;background:linear-gradient(to bottom,#ff0000 0%,#ff00ff 16.7%,#0000ff 33.3%,#00ffff 50%,#00ff00 66.7%,#ffff00 83.3%,#ff0000 100%);"></div>
<svg class="a" style="left:1891px;top:327px;" width="6" height="7" viewBox="0 0 6 7"><path d="M0.5 0.5L5.5 3.5 0.5 6.5z" fill="#e8e8e8"/></svg>
<div class="a" style="left:1357px;top:358px;width:563px;height:3px;background:#3c3c3c;"></div>
<div class="a" style="left:1357px;top:361px;width:563px;height:21px;background:#424242;"></div>
<div class="a" style="left:1357px;top:361px;width:50px;height:21px;background:#535353;"></div>
<div class="a t" style="left:1363px;top:365.9px;font-size:9px;line-height:10.8px;color:#f0f0f0;font-weight:bold;transform:scaleX(0.831);transform-origin:0 0;">Properties</div>
<div class="a" style="left:1407px;top:361px;width:57px;height:21px;background:#474747;"></div>
<div class="a" style="left:1464px;top:361px;width:1px;height:21px;background:#3d3d3d;"></div>
<div class="a t" style="left:1413px;top:365.9px;font-size:9px;line-height:10.8px;color:#bdbdbd;transform:scaleX(0.909);transform-origin:0 0;">Adjustments</div>
<div class="a" style="left:1465px;top:361px;width:44px;height:21px;background:#474747;"></div>
<div class="a" style="left:1509px;top:361px;width:1px;height:21px;background:#3d3d3d;"></div>
<div class="a t" style="left:1471px;top:365.9px;font-size:9px;line-height:10.8px;color:#bdbdbd;transform:scaleX(0.898);transform-origin:0 0;">Libraries</div>
<div class="a" style="left:1914px;top:369px;width:6px;height:5px;background:#8a8a8a;"></div>
<div class="a" style="left:1357px;top:382px;width:563px;height:283px;background:#535353;"></div>
<div class="a" style="left:1364px;top:387px;width:17px;height:17px;background:#3d3d3d;border-radius:2px;"></div>
<svg class="a" style="left:1368px;top:391px;" width="9" height="10" viewBox="0 0 9 10"><path d="M3 0h4l2 2v5H6V4H3z" fill="#e0e0e0"/><rect x="0" y="6" width="4" height="4" fill="#e0e0e0"/><path d="M5 8h2" stroke="#e0e0e0"/></svg>
<div class="a t" style="left:1386px;top:390.9px;font-size:9px;line-height:10.8px;color:#dcdcdc;transform:scaleX(0.863);transform-origin:0 0;">Embedded Smart Object</div>
<div class="a" style="left:1357px;top:407px;width:557px;height:1px;background:#474747;"></div>
<div class="a t" style="left:1363px;top:418.4px;font-size:9px;line-height:10.8px;color:#e8e8e8;font-weight:bold;transform:scaleX(0.886);transform-origin:0 0;">Transform</div>
<svg class="a" style="left:1495px;top:418px;" width="11" height="11" viewBox="0 0 11 11"><path d="M2.2 3.2A3.8 3.8 0 1 1 2 6.5" fill="none" stroke="#e8e8e8" stroke-width="1.3"/><path d="M0.3 1.2L2.6 4 5 2.2z" fill="#e8e8e8"/><path d="M1.5 10.3h8" stroke="#e0e0e0" stroke-width="1.1"/></svg>
<div class="a t" style="left:1363px;top:438.2px;font-size:8.5px;line-height:10.2px;color:#cfcfcf;transform:scaleX(0.880);transform-origin:0 0;">W:</div>
<div class="a t" style="left:1380px;top:438.2px;font-size:8.5px;line-height:10.2px;color:#d8d8d8;transform:scaleX(0.860);transform-origin:0 0;">1.767 in</div>
<div class="a t" style="left:1449px;top:438.2px;font-size:8.5px;line-height:10.2px;color:#cfcfcf;transform:scaleX(0.941);transform-origin:0 0;">H:</div>
<div class="a t" style="left:1463px;top:438.2px;font-size:8.5px;line-height:10.2px;color:#d8d8d8;transform:scaleX(0.862);transform-origin:0 0;">0.38 in</div>
<div class="a t" style="left:1363px;top:454.7px;font-size:8.5px;line-height:10.2px;color:#cfcfcf;transform:scaleX(0.996);transform-origin:0 0;">X:</div>
<div class="a" style="left:1377px;top:452px;width:46px;height:13px;background:#454545;border:1px solid #5e5e5e;box-sizing:border-box;"></div>
<div class="a t" style="left:1380px;top:454.7px;font-size:8.5px;line-height:10.2px;color:#e0e0e0;transform:scaleX(0.784);transform-origin:0 0;">1.81 in</div>
<div class="a t" style="left:1449px;top:454.7px;font-size:8.5px;line-height:10.2px;color:#cfcfcf;transform:scaleX(1.058);transform-origin:0 0;">Y:</div>
<div class="a" style="left:1463px;top:452px;width:46px;height:13px;background:#454545;border:1px solid #5e5e5e;box-sizing:border-box;"></div>
<div class="a t" style="left:1465px;top:454.7px;font-size:8.5px;line-height:10.2px;color:#e0e0e0;transform:scaleX(0.862);transform-origin:0 0;">2.94 in</div>
<svg class="a" style="left:1361px;top:473px;" width="10" height="8" viewBox="0 0 10 8"><path d="M9 7.5H0.7L8 1" fill="none" stroke="#cfcfcf" stroke-width="1.1"/><path d="M5 4a3 3 0 0 1 1 3.5" fill="none" stroke="#cfcfcf"/></svg>
<div class="a" style="left:1376px;top:472px;width:28px;height:12px;background:#454545;border:1px solid #5e5e5e;box-sizing:border-box;"></div>
<div class="a t" style="left:1378px;top:473.7px;font-size:8.5px;line-height:10.2px;color:#e0e0e0;transform:scaleX(0.953);transform-origin:0 0;">0.00°</div>
<div class="a" style="left:1404px;top:472px;width:12px;height:12px;background:#454545;border:1px solid #5e5e5e;box-sizing:border-box;"></div>
<svg class="a" style="left:1407px;top:476px;" width="6" height="4" viewBox="0 0 6 4"><path d="M0.5 0.5l2.5 2.5 2.5-2.5" fill="none" stroke="#bbb"/></svg>
<div class="a t" style="left:1363px;top:498.4px;font-size:9px;line-height:10.8px;color:#dcdcdc;transform:scaleX(0.844);transform-origin:0 0;">Vector Smart Object.ai</div>
<div class="a" style="left:1363px;top:514px;width:545px;height:17px;background:#515151;border:1px solid #5a5a5a;box-sizing:border-box;border-radius:2px;"></div>
<div class="a t" style="left:1369px;top:517.7px;font-size:8.5px;line-height:10.2px;color:#858585;transform:scaleX(0.875);transform-origin:0 0;">Don&#x27;t Apply Layer Comp</div>
<svg class="a" style="left:1899px;top:521px;" width="6" height="4" viewBox="0 0 6 4"><path d="M0.5 0.5l2.5 2.5 2.5-2.5" fill="none" stroke="#777"/></svg>
<div class="a" style="left:1403px;top:541px;width:86px;height:17px;background:#424242;border:1px solid #5a5a5a;box-sizing:border-box;border-radius:2px;"></div>
<div class="a t" style="left:1424.0px;top:545.7px;font-size:8.5px;line-height:10.2px;color:#e8e8e8;transform:scaleX(0.862);transform-origin:0 0;">Edit Contents</div>
<div class="a" style="left:1403px;top:562px;width:86px;height:17px;background:#424242;border:1px solid #5a5a5a;box-sizing:border-box;border-radius:2px;"></div>
<div class="a t" style="left:1414.0px;top:566.2px;font-size:8.5px;line-height:10.2px;color:#e8e8e8;transform:scaleX(0.868);transform-origin:0 0;">Convert to Linked...</div>
<div class="a" style="left:1403px;top:582px;width:86px;height:17px;background:#424242;border:1px solid #5a5a5a;box-sizing:border-box;border-radius:2px;"></div>
<div class="a t" style="left:1417.0px;top:586.7px;font-size:8.5px;line-height:10.2px;color:#e8e8e8;transform:scaleX(0.865);transform-origin:0 0;">Convert to Layers</div>
<div class="a" style="left:1914px;top:409px;width:6px;height:236px;background:#4a4a4a;"></div>
<div class="a" style="left:1915px;top:420px;width:5px;height:215px;background:#5e5e5e;"></div>
<div class="a" style="left:1357px;top:665px;width:563px;height:3px;background:#3c3c3c;"></div>
<div class="a" style="left:1357px;top:668px;width:563px;height:21px;background:#424242;"></div>
<div class="a" style="left:1357px;top:668px;width:35px;height:21px;background:#535353;"></div>
<div class="a t" style="left:1363px;top:672.9px;font-size:9px;line-height:10.8px;color:#f0f0f0;font-weight:bold;transform:scaleX(0.793);transform-origin:0 0;">Layers</div>
<div class="a" style="left:1392px;top:668px;width:44px;height:21px;background:#474747;"></div>
<div class="a" style="left:1436px;top:668px;width:1px;height:21px;background:#3d3d3d;"></div>
<div class="a t" style="left:1399px;top:672.9px;font-size:9px;line-height:10.8px;color:#bdbdbd;transform:scaleX(0.842);transform-origin:0 0;">Channels</div>
<div class="a" style="left:1437px;top:668px;width:33px;height:21px;background:#474747;"></div>
<div class="a" style="left:1470px;top:668px;width:1px;height:21px;background:#3d3d3d;"></div>
<div class="a t" style="left:1445px;top:672.9px;font-size:9px;line-height:10.8px;color:#bdbdbd;transform:scaleX(0.826);transform-origin:0 0;">Paths</div>
<div class="a" style="left:1914px;top:676px;width:6px;height:5px;background:#8a8a8a;"></div>
<div class="a" style="left:1357px;top:689px;width:563px;height:365px;background:#535353;"></div>
<div class="a" style="left:1360px;top:696px;width:65px;height:16px;background:#454545;border:1px solid #5a5a5a;box-sizing:border-box;border-radius:2px;"></div>
<svg class="a" style="left:1365px;top:699px;" width="9" height="10" viewBox="0 0 9 10"><circle cx="3.8" cy="3.8" r="3" fill="none" stroke="#e8e8e8" stroke-width="1.4"/><path d="M6 6l2.5 2.8" stroke="#e8e8e8" stroke-width="1.6"/></svg>
<div class="a t" style="left:1376px;top:699.4px;font-size:9px;line-height:10.8px;color:#e8e8e8;transform:scaleX(0.833);transform-origin:0 0;">Kind</div>
<svg class="a" style="left:1417px;top:702px;" width="6" height="4" viewBox="0 0 6 4"><path d="M0.5 0.5l2.5 2.5 2.5-2.5" fill="none" stroke="#ccc"/></svg>
<svg class="a" style="left:1433px;top:698px;" width="10" height="10" viewBox="0 0 10 10"><rect x="0.5" y="1.5" width="9" height="7" fill="none" stroke="#d8d8d8"/><path d="M2 7l2-3 1.5 2 1-1 1.5 2z" fill="#d8d8d8"/></svg>
<svg class="a" style="left:1452px;top:698px;" width="10" height="10" viewBox="0 0 10 10"><circle cx="5" cy="5" r="4.3" fill="none" stroke="#d8d8d8" stroke-width="1.2"/><path d="M8 2L2 8A4.3 4.3 0 0 0 8 2z" fill="#d8d8d8"/></svg>
<svg class="a" style="left:1471px;top:698px;" width="9" height="10" viewBox="0 0 9 10"><path d="M0 0h9v3H8L7.5 1.5H5.5V8.5L7 9v1H2V9l1.5-.5V1.5h-2L1 3H0z" fill="#e0e0e0"/></svg>
<svg class="a" style="left:1488px;top:698px;" width="10" height="10" viewBox="0 0 10 10"><rect x="1.5" y="1.5" width="7" height="7" fill="none" stroke="#d8d8d8" stroke-width="1.2"/><rect x="0" y="0" width="3" height="3" fill="#d8d8d8"/><rect x="7" y="0" width="3" height="3" fill="#d8d8d8"/><rect x="0" y="7" width="3" height="3" fill="#d8d8d8"/><rect x="7" y="7" width="3" height="3" fill="#d8d8d8"/></svg>
<svg class="a" style="left:1506px;top:698px;" width="10" height="11" viewBox="0 0 10 11"><path d="M3 0h4l3 3v6H6V5H3z" fill="#d8d8d8"/><rect x="0" y="6" width="5" height="5" fill="#e8e8e8"/></svg>
<div class="a" style="left:1525px;top:697px;width:6px;height:14px;background:#4a4a4a;border-radius:3px;border:1px solid #5a5a5a;box-sizing:border-box;"></div>
<div class="a" style="left:1524px;top:694px;width:8px;height:8px;background:#e8e8e8;border-radius:50%;"></div>
<div class="a" style="left:1357px;top:713px;width:557px;height:1px;background:#474747;"></div>
<div class="a" style="left:1360px;top:717px;width:96px;height:16px;background:#515151;border:1px solid #5a5a5a;box-sizing:border-box;border-radius:2px;"></div>
<div class="a t" style="left:1366px;top:720.4px;font-size:9px;line-height:10.8px;color:#858585;transform:scaleX(0.828);transform-origin:0 0;">Normal</div>
<svg class="a" style="left:1450px;top:723px;" width="6" height="4" viewBox="0 0 6 4"><path d="M0.5 0.5l2.5 2.5 2.5-2.5" fill="none" stroke="#777"/></svg>
<div class="a t" style="left:1461px;top:719.9px;font-size:9px;line-height:10.8px;color:#8a8a8a;transform:scaleX(0.848);transform-origin:0 0;">Opacity:</div>
<div class="a" style="left:1493px;top:718px;width:38px;height:12px;background:#4d4d4d;border:1px solid #575757;box-sizing:border-box;"></div>
<div class="a" style="left:1519px;top:718px;width:1px;height:12px;background:#575757;"></div>
<div class="a t" style="left:1497px;top:720.2px;font-size:8.5px;line-height:10.2px;color:#7a7a7a;transform:scaleX(0.828);transform-origin:0 0;">100%</div>
<div class="a" style="left:1357px;top:734px;width:557px;height:1px;background:#474747;"></div>
<div class="a t" style="left:1361px;top:740.9px;font-size:9px;line-height:10.8px;color:#e0e0e0;transform:scaleX(0.837);transform-origin:0 0;">Lock:</div>
<svg class="a" style="left:1386px;top:740px;" width="10" height="10" viewBox="0 0 10 10"><rect x="0.5" y="0.5" width="9" height="9" fill="none" stroke="#e0e0e0"/><path d="M1 1h2.5v2.5H1zM6 1h3v2.5H6zM3.5 3.5H6V6H3.5zM1 6h2.5v3H1zM6 6h3v3H6z" fill="#e0e0e0"/></svg>
<svg class="a" style="left:1402px;top:739px;" width="11" height="11" viewBox="0 0 11 11"><path d="M10.5 0.5L5 6" stroke="#e0e0e0" stroke-width="1.8"/><path d="M4 5.5C2 6 2 8 0.5 10.5 3 10 5 9 5.5 7z" fill="#e0e0e0"/></svg>
<svg class="a" style="left:1418px;top:739px;" width="11" height="11" viewBox="0 0 11 11"><path d="M5.5 0l2 2.2H6.3v2.5h2.5V3.5L11 5.5 8.8 7.5V6.3H6.3v2.5h1.2L5.5 11 3.5 8.8h1.2V6.3H2.2v1.2L0 5.5l2.2-2V4.7h2.5V2.2H3.5z" fill="#e0e0e0"/></svg>
<svg class="a" style="left:1435px;top:739px;" width="12" height="12" viewBox="0 0 12 12"><path d="M3 0v9h9M0 3h9v9" fill="none" stroke="#e0e0e0" stroke-width="1.2"/><path d="M9 0l3 2" stroke="#e0e0e0"/></svg>
<svg class="a" style="left:1453px;top:739px;" width="9" height="11" viewBox="0 0 9 11"><path d="M2 5V3a2.5 2.5 0 0 1 5 0v2" fill="none" stroke="#e8e8e8" stroke-width="1.5"/><rect x="0" y="5" width="9" height="6" fill="#e8e8e8"/><rect x="4" y="7" width="1.2" height="2" fill="#535353"/></svg>
<div class="a t" style="left:1478px;top:740.9px;font-size:9px;line-height:10.8px;color:#8a8a8a;transform:scaleX(0.786);transform-origin:0 0;">Fill:</div>
<div class="a" style="left:1493px;top:739px;width:38px;height:12px;background:#4d4d4d;border:1px solid #575757;box-sizing:border-box;"></div>
<div class="a" style="left:1519px;top:739px;width:1px;height:12px;background:#575757;"></div>
<div class="a t" style="left:1497px;top:741.2px;font-size:8.5px;line-height:10.2px;color:#7a7a7a;transform:scaleX(0.828);transform-origin:0 0;">100%</div>
<div class="a" style="left:1379px;top:757px;width:1px;height:281px;background:#474747;"></div>
<div class="a" style="left:1357px;top:785px;width:557px;height:1px;background:#474747;"></div>
<div class="a" style="left:1357px;top:855px;width:557px;height:1px;background:#474747;"></div>
<div class="a" style="left:1357px;top:882px;width:557px;height:1px;background:#474747;"></div>
<div class="a" style="left:1357px;top:902px;width:557px;height:1px;background:#474747;"></div>
<div class="a" style="left:1357px;top:931px;width:557px;height:1px;background:#474747;"></div>
<div class="a" style="left:1357px;top:959px;width:557px;height:1px;background:#474747;"></div>
<div class="a" style="left:1357px;top:988px;width:557px;height:1px;background:#474747;"></div>
<div class="a" style="left:1357px;top:1037px;width:557px;height:1px;background:#474747;"></div>
<div class="a" style="left:1380px;top:932px;width:534px;height:27px;background:#696969;"></div>
<div class="a" style="left:1363px;top:766px;width:10px;height:10px;background:transparent;border:1px solid #5d5d5d;box-sizing:border-box;"></div>
<div class="a" style="left:1383px;top:760px;width:23px;height:22px;background:#ee4b5b;border:1px solid #2f2f2f;box-sizing:border-box;"></div>
<div class="a" style="left:1384px;top:761px;width:21px;height:2px;background:#6f86c8;"></div>
<div class="a" style="left:1384px;top:778px;width:21px;height:3px;background:#cfe0a8;"></div>
<div class="a" style="left:1387px;top:766px;width:8px;height:8px;background:#f6a21f;border-radius:50%;"></div>
<div class="a" style="left:1394px;top:771px;width:11px;height:11px;background:#3a3a3a;"></div>
<svg class="a" style="left:1396px;top:772px;" width="8" height="9" viewBox="0 0 8 9"><path d="M3 0h3l2 2v5H5V4H3z" fill="#e8e8e8"/><rect x="0" y="5" width="4" height="4" fill="#e8e8e8"/></svg>
<div class="a t" style="left:1413px;top:766.9px;font-size:9px;line-height:10.8px;color:#ececec;transform:scaleX(0.844);transform-origin:0 0;">Vector Smart Object</div>
<div class="a" style="left:1363px;top:795px;width:10px;height:10px;background:transparent;border:1px solid #5d5d5d;box-sizing:border-box;"></div>
<div class="a" style="left:1383px;top:789px;width:23px;height:22px;background:#fff;background-image:conic-gradient(#fff 25%,#cfcfcf 0 50%,#fff 0 75%,#cfcfcf 0);background-size:6px 6px;border:1px solid #2f2f2f;box-sizing:border-box;"></div>
<svg class="a" style="left:1392px;top:793px;" width="6" height="8" viewBox="0 0 6 8"><path d="M1 8V3a2 2 0 0 1 4 0" fill="none" stroke="#222" stroke-width="1.2"/></svg>
<div class="a" style="left:1394px;top:800px;width:11px;height:11px;background:#3a3a3a;"></div>
<svg class="a" style="left:1396px;top:801px;" width="8" height="9" viewBox="0 0 8 9"><path d="M3 0h3l2 2v5H5V4H3z" fill="#e8e8e8"/><rect x="0" y="5" width="4" height="4" fill="#e8e8e8"/></svg>
<div class="a t" style="left:1413px;top:795.9px;font-size:9px;line-height:10.8px;color:#ececec;transform:scaleX(0.844);transform-origin:0 0;">Vector Smart Object</div>
<svg class="a" style="left:1893px;top:795px;" width="12" height="11" viewBox="0 0 12 11"><circle cx="4.5" cy="6" r="4" fill="none" stroke="#d0d0d0" stroke-width="1.1"/><circle cx="7" cy="4.5" r="3.5" fill="none" stroke="#d0d0d0" stroke-width="1.1"/></svg>
<div class="a" style="left:1906px;top:786px;width:8px;height:29px;background:#4a4a4a;"></div>
<svg class="a" style="left:1907px;top:797px;" width="6" height="4" viewBox="0 0 6 4"><path d="M0.5 3.5l2.5-2.5 2.5 2.5" fill="none" stroke="#ccc"/></svg>
<svg class="a" style="left:1393px;top:823px;" width="12" height="8" viewBox="0 0 12 8"><path d="M0.7 4C2.5 1 9.5 1 11.3 4 9.5 7 2.5 7 0.7 4z" fill="none" stroke="#9a9a9a" stroke-width="1.1"/><circle cx="6" cy="4" r="1.7" fill="none" stroke="#9a9a9a"/></svg>
<div class="a" style="left:1407px;top:817px;width:23px;height:22px;background:#fff;border:1px solid #2f2f2f;box-sizing:border-box;"></div>
<div class="a t" style="left:1438px;top:821.9px;font-size:9px;line-height:10.8px;color:#e8e8e8;transform:scaleX(0.843);transform-origin:0 0;">Smart Filters</div>
<svg class="a" style="left:1406px;top:843px;" width="12" height="8" viewBox="0 0 12 8"><path d="M0.7 4C2.5 1 9.5 1 11.3 4 9.5 7 2.5 7 0.7 4z" fill="none" stroke="#9a9a9a" stroke-width="1.1"/><circle cx="6" cy="4" r="1.7" fill="none" stroke="#9a9a9a"/></svg>
<div class="a t" style="left:1421px;top:841.9px;font-size:9px;line-height:10.8px;color:#e8e8e8;transform:scaleX(0.769);transform-origin:0 0;">Levels</div>
<svg class="a" style="left:1894px;top:843px;" width="11" height="9" viewBox="0 0 11 9"><path d="M0 2h11M0 6h11" stroke="#d8d8d8" stroke-width="1.1"/><path d="M3 0v3M7 4v4" stroke="#d8d8d8" stroke-width="1.3"/></svg>
<div class="a" style="left:1363px;top:865px;width:10px;height:10px;background:transparent;border:1px solid #5d5d5d;box-sizing:border-box;"></div>
<div class="a" style="left:1383px;top:859px;width:23px;height:22px;background:#fff;background-image:conic-gradient(#fff 25%,#cfcfcf 0 50%,#fff 0 75%,#cfcfcf 0);background-size:6px 6px;border:1px solid #2f2f2f;box-sizing:border-box;"></div>
<div class="a" style="left:1394px;top:870px;width:11px;height:11px;background:#3a3a3a;"></div>
<svg class="a" style="left:1396px;top:871px;" width="8" height="9" viewBox="0 0 8 9"><path d="M3 0h3l2 2v5H5V4H3z" fill="#e8e8e8"/><rect x="0" y="5" width="4" height="4" fill="#e8e8e8"/></svg>
<div class="a t" style="left:1413px;top:865.4px;font-size:9px;line-height:10.8px;color:#ececec;transform:scaleX(0.843);transform-origin:0 0;">Vector Smart Object copy</div>
<svg class="a" style="left:1362px;top:889px;" width="12" height="8" viewBox="0 0 12 8"><path d="M0.7 4C2.5 1 9.5 1 11.3 4 9.5 7 2.5 7 0.7 4z" fill="none" stroke="#e0e0e0" stroke-width="1.2"/><circle cx="6" cy="4" r="1.9" fill="#e0e0e0"/></svg>
<svg class="a" style="left:1383px;top:890px;" width="6" height="4" viewBox="0 0 6 4"><path d="M0.5 0.5l2.5 2.5 2.5-2.5" fill="none" stroke="#bbb"/></svg>
<svg class="a" style="left:1391px;top:888px;" width="12" height="10" viewBox="0 0 12 10"><path d="M0.5 1.5h4l1 1.5h6v6.5H0.5z" fill="#e0e0e0"/><path d="M0.5 4h11" stroke="#535353"/></svg>
<div class="a t" style="left:1411px;top:888.4px;font-size:9px;line-height:10.8px;color:#e8e8e8;transform:scaleX(0.861);transform-origin:0 0;">Group 1</div>
<svg class="a" style="left:1362px;top:913px;" width="12" height="8" viewBox="0 0 12 8"><path d="M0.7 4C2.5 1 9.5 1 11.3 4 9.5 7 2.5 7 0.7 4z" fill="none" stroke="#e0e0e0" stroke-width="1.2"/><circle cx="6" cy="4" r="1.9" fill="#e0e0e0"/></svg>
<div class="a" style="left:1395px;top:906px;width:23px;height:22px;background:#fff;background-image:conic-gradient(#fff 25%,#cfcfcf 0 50%,#fff 0 75%,#cfcfcf 0);background-size:6px 6px;border:1px solid #2f2f2f;box-sizing:border-box;"></div>
<div class="a" style="left:1406px;top:917px;width:11px;height:11px;background:#3a3a3a;"></div>
<svg class="a" style="left:1408px;top:918px;" width="8" height="9" viewBox="0 0 8 9"><path d="M3 0h3l2 2v5H5V4H3z" fill="#e8e8e8"/><rect x="0" y="5" width="4" height="4" fill="#e8e8e8"/></svg>
<div class="a t" style="left:1425px;top:912.4px;font-size:9px;line-height:10.8px;color:#ececec;transform:scaleX(0.844);transform-origin:0 0;">Vector Smart Object</div>
<div class="a" style="left:1363px;top:941px;width:10px;height:10px;background:transparent;border:1px solid #5d5d5d;box-sizing:border-box;"></div>
<div class="a" style="left:1395px;top:935px;width:23px;height:22px;background:#fff;background-image:conic-gradient(#fff 25%,#cfcfcf 0 50%,#fff 0 75%,#cfcfcf 0);background-size:6px 6px;border:1px solid #2f2f2f;box-sizing:border-box;"></div>
<div class="a" style="left:1406px;top:946px;width:11px;height:11px;background:#3a3a3a;"></div>
<svg class="a" style="left:1408px;top:947px;" width="8" height="9" viewBox="0 0 8 9"><path d="M3 0h3l2 2v5H5V4H3z" fill="#e8e8e8"/><rect x="0" y="5" width="4" height="4" fill="#e8e8e8"/></svg>
<div class="a t" style="left:1425px;top:941.4px;font-size:9px;line-height:10.8px;color:#f2f2f2;transform:scaleX(0.844);transform-origin:0 0;">Vector Smart Object</div>
<svg class="a" style="left:1393px;top:933px;" width="26" height="26" viewBox="0 0 26 26"><path d="M0.5 5V0.5h5M20.5 0.5h5v5M25.5 20.5v5h-5M5.5 25.5h-5v-5" fill="none" stroke="#e8e8e8" stroke-width="1"/></svg>
<svg class="a" style="left:1362px;top:971px;" width="12" height="8" viewBox="0 0 12 8"><path d="M0.7 4C2.5 1 9.5 1 11.3 4 9.5 7 2.5 7 0.7 4z" fill="none" stroke="#e0e0e0" stroke-width="1.2"/><circle cx="6" cy="4" r="1.9" fill="#e0e0e0"/></svg>
<div class="a" style="left:1395px;top:964px;width:23px;height:22px;background:#fff;background-image:conic-gradient(#fff 25%,#cfcfcf 0 50%,#fff 0 75%,#cfcfcf 0);background-size:6px 6px;border:1px solid #2f2f2f;box-sizing:border-box;"></div>
<div class="a" style="left:1406px;top:975px;width:11px;height:11px;background:#3a3a3a;"></div>
<svg class="a" style="left:1408px;top:976px;" width="8" height="9" viewBox="0 0 8 9"><path d="M3 0h3l2 2v5H5V4H3z" fill="#e8e8e8"/><rect x="0" y="5" width="4" height="4" fill="#e8e8e8"/></svg>
<div class="a t" style="left:1425px;top:970.4px;font-size:9px;line-height:10.8px;color:#ececec;transform:scaleX(0.844);transform-origin:0 0;">Vector Smart Object</div>
<svg class="a" style="left:1362px;top:1000px;" width="12" height="8" viewBox="0 0 12 8"><path d="M0.7 4C2.5 1 9.5 1 11.3 4 9.5 7 2.5 7 0.7 4z" fill="none" stroke="#e0e0e0" stroke-width="1.2"/><circle cx="6" cy="4" r="1.9" fill="#e0e0e0"/></svg>
<div class="a" style="left:1383px;top:993px;width:23px;height:22px;background:#fff;background-image:conic-gradient(#fff 25%,#cfcfcf 0 50%,#fff 0 75%,#cfcfcf 0);background-size:6px 6px;border:1px solid #2f2f2f;box-sizing:border-box;"></div>
<div class="a" style="left:1394px;top:1004px;width:11px;height:11px;background:#3a3a3a;"></div>
<svg class="a" style="left:1396px;top:1005px;" width="8" height="9" viewBox="0 0 8 9"><path d="M3 0h3l2 2v5H5V4H3z" fill="#e8e8e8"/><rect x="0" y="5" width="4" height="4" fill="#e8e8e8"/></svg>
<div class="a t" style="left:1413px;top:999.4px;font-size:9px;line-height:10.8px;color:#ececec;transform:scaleX(0.844);transform-origin:0 0;">Vector Smart Object</div>
<svg class="a" style="left:1893px;top:998px;" width="12" height="11" viewBox="0 0 12 11"><circle cx="4.5" cy="6" r="4" fill="none" stroke="#d0d0d0" stroke-width="1.1"/><circle cx="7" cy="4.5" r="3.5" fill="none" stroke="#d0d0d0" stroke-width="1.1"/></svg>
<div class="a" style="left:1906px;top:989px;width:8px;height:29px;background:#4a4a4a;"></div>
<svg class="a" style="left:1907px;top:1000px;" width="6" height="4" viewBox="0 0 6 4"><path d="M0.5 3.5l2.5-2.5 2.5 2.5" fill="none" stroke="#ccc"/></svg>
<svg class="a" style="left:1393px;top:1025px;" width="12" height="8" viewBox="0 0 12 8"><path d="M0.7 4C2.5 1 9.5 1 11.3 4 9.5 7 2.5 7 0.7 4z" fill="none" stroke="#e0e0e0" stroke-width="1.2"/><circle cx="6" cy="4" r="1.9" fill="#e0e0e0"/></svg>
<div class="a" style="left:1407px;top:1019px;width:23px;height:19px;background:#fff;border:1px solid #2f2f2f;box-sizing:border-box;"></div>
<div class="a t" style="left:1438px;top:1024.4px;font-size:9px;line-height:10.8px;color:#e8e8e8;transform:scaleX(0.843);transform-origin:0 0;">Smart Filters</div>
<div class="a" style="left:1914px;top:757px;width:6px;height:281px;background:#4a4a4a;"></div>
<div class="a" style="left:1915px;top:770px;width:5px;height:110px;background:#5e5e5e;"></div>
<svg class="a" style="left:1771px;top:1043px;" width="13" height="7" viewBox="0 0 13 7"><rect x="0.6" y="0.6" width="6" height="5.5" rx="2.7" fill="none" stroke="#888" stroke-width="1.1"/><rect x="6" y="0.6" width="6" height="5.5" rx="2.7" fill="none" stroke="#888" stroke-width="1.1"/></svg>
<div class="a t" style="left:1794px;top:1040.7px;font-size:11px;line-height:13.2px;color:#c8c8c8;transform:scaleX(1.169);transform-origin:0 0;font-style:italic;">fx</div>
<svg class="a" style="left:1812px;top:1042px;" width="13" height="9" viewBox="0 0 13 9"><rect x="0" y="0" width="13" height="9" fill="#c8c8c8"/><circle cx="6.5" cy="4.5" r="3" fill="#535353"/></svg>
<svg class="a" style="left:1833px;top:1041px;" width="11" height="11" viewBox="0 0 11 11"><circle cx="5.5" cy="5.5" r="4.5" fill="none" stroke="#c8c8c8" stroke-width="1.2"/><path d="M8.7 2.3L2.3 8.7A4.5 4.5 0 0 0 8.7 2.3z" fill="#c8c8c8"/></svg>
<svg class="a" style="left:1853px;top:1042px;" width="12" height="10" viewBox="0 0 12 10"><path d="M0 1h4.5l1 1.5H12V10H0z" fill="#c8c8c8"/></svg>
<svg class="a" style="left:1874px;top:1041px;" width="12" height="12" viewBox="0 0 12 12"><rect x="0.6" y="0.6" width="10.8" height="10.8" fill="none" stroke="#c8c8c8" stroke-width="1.2"/><path d="M6 3v6M3 6h6" stroke="#c8c8c8" stroke-width="1.3"/></svg>
<svg class="a" style="left:1895px;top:1041px;" width="11" height="12" viewBox="0 0 11 12"><path d="M0 2h11M4 0h3M1.5 3h8l-.7 9H2.2z" fill="none" stroke="#c8c8c8" stroke-width="1.2"/><path d="M4 5v5M7 5v5" stroke="#c8c8c8"/></svg>
</body></html>
